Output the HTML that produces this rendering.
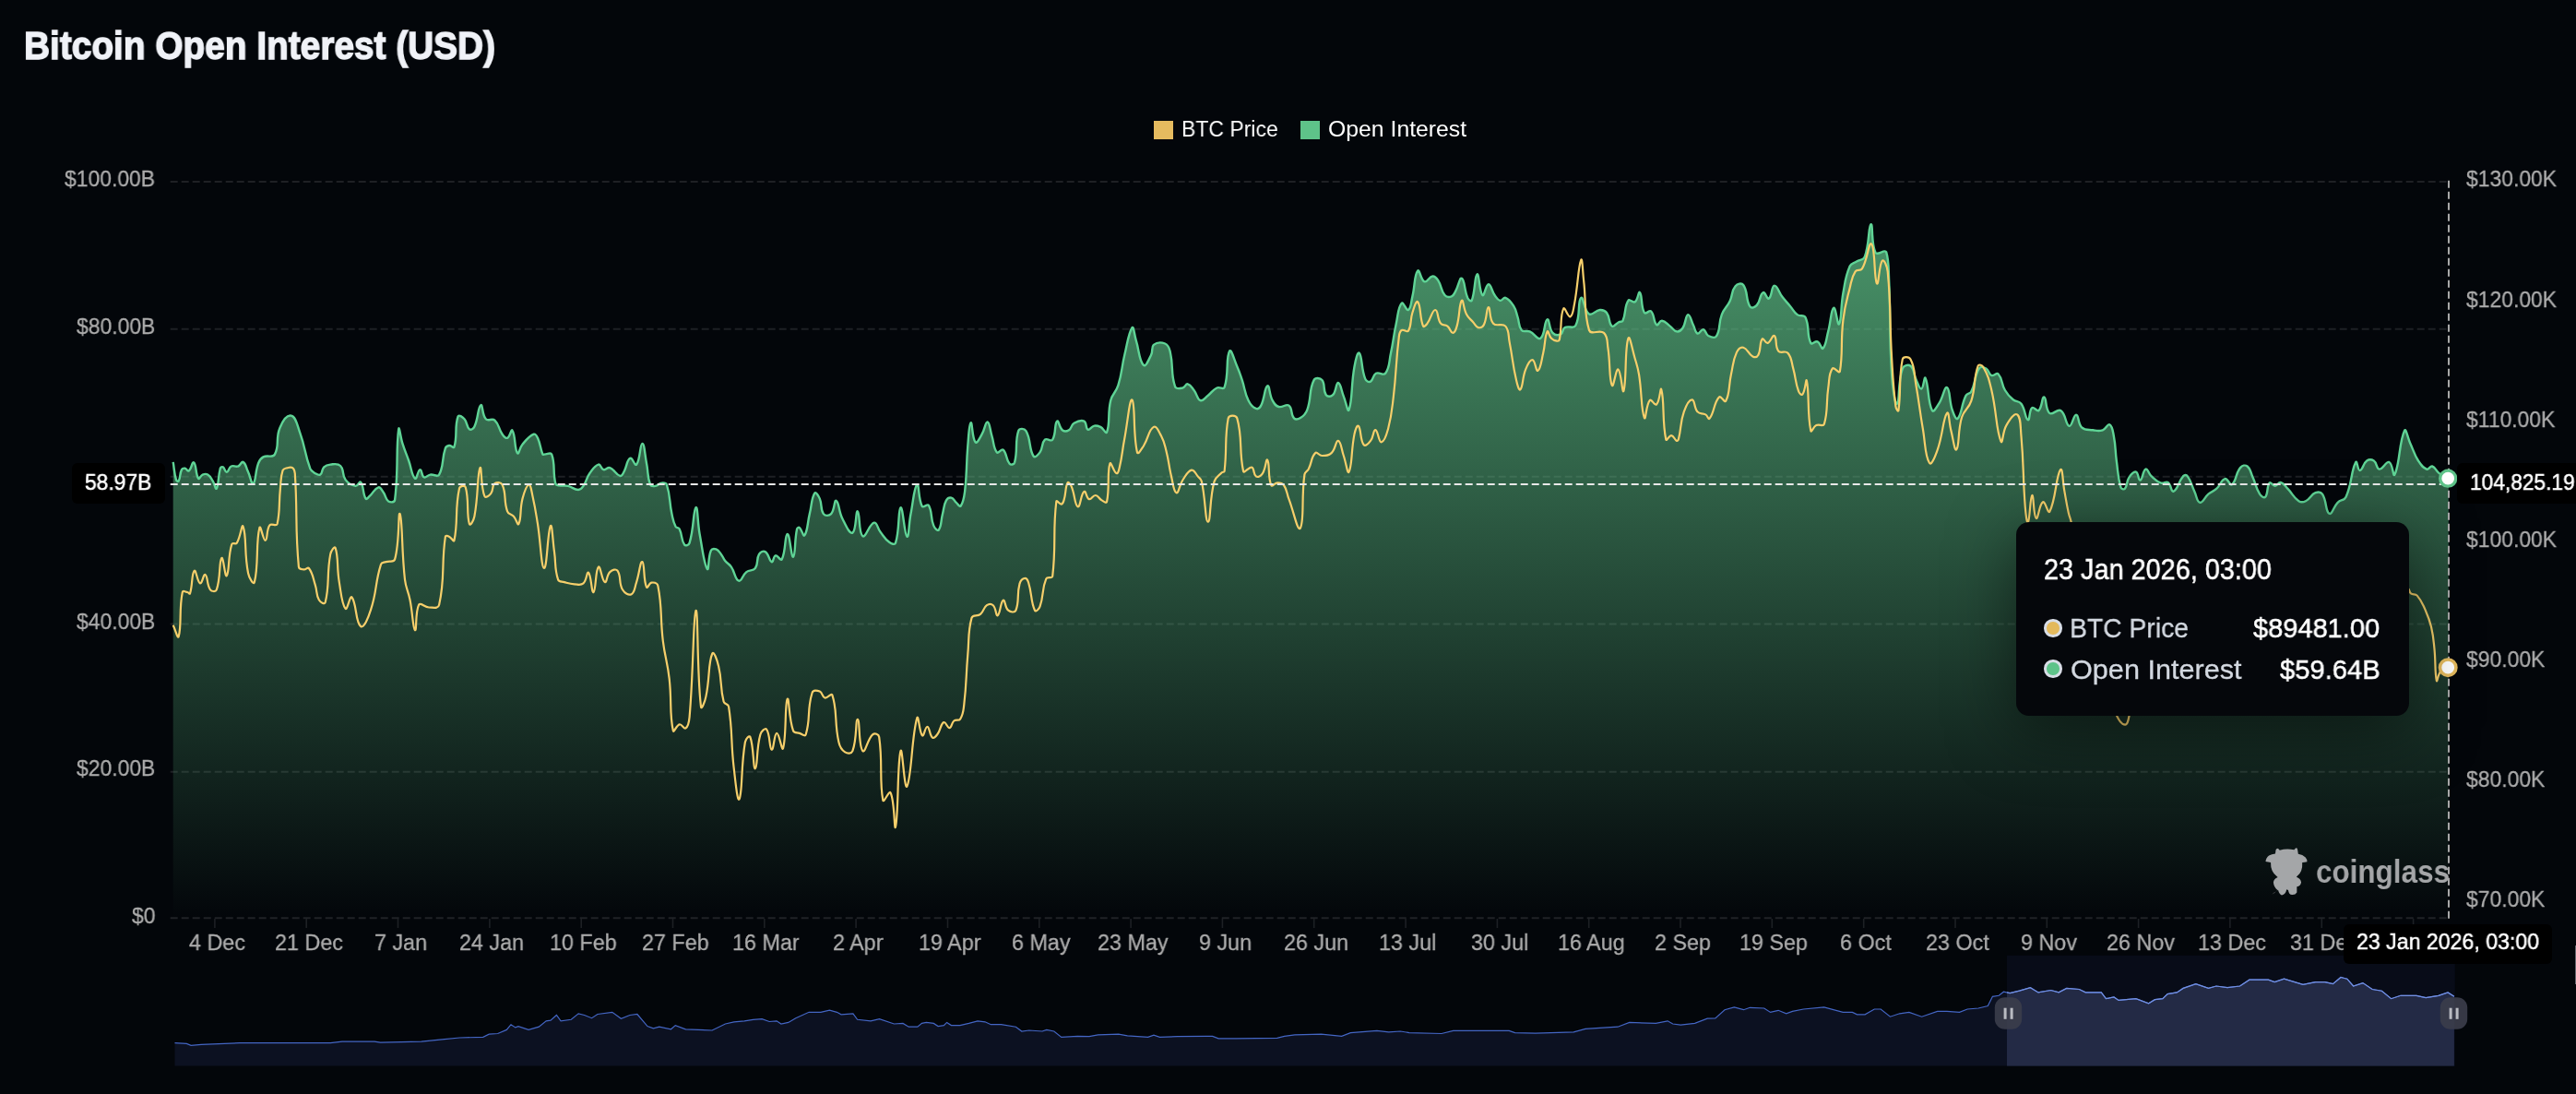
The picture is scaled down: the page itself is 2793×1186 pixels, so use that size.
<!DOCTYPE html>
<html><head><meta charset="utf-8"><style>
html,body{margin:0;padding:0;}
body{width:2793px;height:1186px;background:#03060a;overflow:hidden;position:relative;font-family:"Liberation Sans",sans-serif;}
.t{position:absolute;white-space:nowrap;line-height:1;transform-origin:0 0;will-change:transform;font-family:"Liberation Sans",sans-serif;}
</style></head><body>
<svg width="2793" height="1186" style="position:absolute;left:0;top:0">
<defs><linearGradient id="ga" gradientUnits="userSpaceOnUse" x1="0" y1="244" x2="0" y2="996"><stop offset="0" stop-color="#61c58a" stop-opacity="0.75"/><stop offset="1" stop-color="#61c58a" stop-opacity="0"/></linearGradient><clipPath id="cp"><rect x="187.7" y="0" width="2467.1" height="996"/></clipPath></defs>
<line x1="184.7" y1="197.0" x2="2655" y2="197.0" stroke="#1e2024" stroke-width="2" stroke-dasharray="8 4"/>
<line x1="184.7" y1="356.8" x2="2655" y2="356.8" stroke="#1e2024" stroke-width="2" stroke-dasharray="8 4"/>
<line x1="184.7" y1="516.7" x2="2655" y2="516.7" stroke="#1e2024" stroke-width="2" stroke-dasharray="8 4"/>
<line x1="184.7" y1="676.6" x2="2655" y2="676.6" stroke="#1e2024" stroke-width="2" stroke-dasharray="8 4"/>
<line x1="184.7" y1="836.7" x2="2655" y2="836.7" stroke="#1e2024" stroke-width="2" stroke-dasharray="8 4"/>
<line x1="184.7" y1="995.3" x2="2655" y2="995.3" stroke="#202327" stroke-width="2" stroke-dasharray="8 4"/>
<line x1="232.9" y1="996" x2="232.9" y2="1006" stroke="#1d2024" stroke-width="1.6"/>
<line x1="332.2" y1="996" x2="332.2" y2="1006" stroke="#1d2024" stroke-width="1.6"/>
<line x1="431.5" y1="996" x2="431.5" y2="1006" stroke="#1d2024" stroke-width="1.6"/>
<line x1="530.9" y1="996" x2="530.9" y2="1006" stroke="#1d2024" stroke-width="1.6"/>
<line x1="630.2" y1="996" x2="630.2" y2="1006" stroke="#1d2024" stroke-width="1.6"/>
<line x1="729.5" y1="996" x2="729.5" y2="1006" stroke="#1d2024" stroke-width="1.6"/>
<line x1="828.8" y1="996" x2="828.8" y2="1006" stroke="#1d2024" stroke-width="1.6"/>
<line x1="928.1" y1="996" x2="928.1" y2="1006" stroke="#1d2024" stroke-width="1.6"/>
<line x1="1027.5" y1="996" x2="1027.5" y2="1006" stroke="#1d2024" stroke-width="1.6"/>
<line x1="1126.8" y1="996" x2="1126.8" y2="1006" stroke="#1d2024" stroke-width="1.6"/>
<line x1="1226.1" y1="996" x2="1226.1" y2="1006" stroke="#1d2024" stroke-width="1.6"/>
<line x1="1325.4" y1="996" x2="1325.4" y2="1006" stroke="#1d2024" stroke-width="1.6"/>
<line x1="1424.7" y1="996" x2="1424.7" y2="1006" stroke="#1d2024" stroke-width="1.6"/>
<line x1="1524.1" y1="996" x2="1524.1" y2="1006" stroke="#1d2024" stroke-width="1.6"/>
<line x1="1623.4" y1="996" x2="1623.4" y2="1006" stroke="#1d2024" stroke-width="1.6"/>
<line x1="1722.7" y1="996" x2="1722.7" y2="1006" stroke="#1d2024" stroke-width="1.6"/>
<line x1="1822.0" y1="996" x2="1822.0" y2="1006" stroke="#1d2024" stroke-width="1.6"/>
<line x1="1921.3" y1="996" x2="1921.3" y2="1006" stroke="#1d2024" stroke-width="1.6"/>
<line x1="2020.7" y1="996" x2="2020.7" y2="1006" stroke="#1d2024" stroke-width="1.6"/>
<line x1="2120.0" y1="996" x2="2120.0" y2="1006" stroke="#1d2024" stroke-width="1.6"/>
<line x1="2219.3" y1="996" x2="2219.3" y2="1006" stroke="#1d2024" stroke-width="1.6"/>
<line x1="2318.6" y1="996" x2="2318.6" y2="1006" stroke="#1d2024" stroke-width="1.6"/>
<line x1="2417.9" y1="996" x2="2417.9" y2="1006" stroke="#1d2024" stroke-width="1.6"/>
<line x1="2517.3" y1="996" x2="2517.3" y2="1006" stroke="#1d2024" stroke-width="1.6"/>
<line x1="2616.6" y1="996" x2="2616.6" y2="1006" stroke="#1d2024" stroke-width="1.6"/>
<path d="M187.7,500.9 C189.2,509.5 188.6,512.1 191.0,520.1 C191.3,521.3 193.2,522.4 193.7,521.4 C195.9,517.4 194.6,513.8 197.0,509.1 C197.7,507.7 199.1,507.5 200.6,507.7 C202.5,508.1 203.3,511.4 204.7,510.5 C207.6,508.5 208.4,500.0 210.2,501.4 C213.1,503.7 211.9,514.3 215.1,518.7 C216.2,520.2 217.3,515.6 219.7,514.6 C221.9,513.7 223.3,513.4 225.2,514.6 C228.3,516.5 228.6,518.1 230.7,521.4 C232.9,524.9 233.7,531.4 234.8,529.6 C237.4,525.3 236.2,516.9 238.9,507.7 C239.3,506.5 240.7,505.8 241.7,506.3 C243.8,507.6 243.9,512.0 245.8,511.8 C248.0,511.6 247.8,507.0 250.7,505.5 C253.4,504.2 255.2,506.6 258.1,505.5 C261.0,504.5 261.8,499.8 263.6,500.9 C266.7,502.7 266.7,506.8 269.1,511.8 C271.7,517.3 272.7,525.8 274.6,524.2 C277.7,521.5 276.5,511.6 280.1,502.2 C281.4,498.6 282.3,497.2 285.5,495.4 C290.3,492.8 295.5,496.9 297.9,492.6 C303.4,482.7 298.4,475.5 303.4,463.9 C306.4,456.7 311.1,449.6 315.7,450.7 C321.0,452.0 322.1,460.5 325.3,469.3 C331.4,486.2 330.1,491.2 336.2,507.7 C337.5,510.9 338.9,511.4 341.7,513.2 C343.8,514.5 345.6,515.7 347.2,514.6 C349.9,512.7 348.6,509.1 351.3,506.3 C353.5,504.2 355.0,503.9 358.2,503.6 C363.0,503.2 366.1,502.0 369.1,505.0 C373.5,509.4 370.5,514.6 374.6,520.1 C377.9,524.5 380.8,526.1 385.6,526.9 C388.2,527.3 389.7,521.1 391.1,522.8 C394.7,527.3 393.1,535.3 396.6,540.6 C397.5,542.0 399.0,539.4 400.7,537.9 C405.2,533.8 405.9,529.5 410.3,528.3 C412.7,527.6 413.7,531.0 415.7,533.8 C418.6,537.7 417.8,541.1 421.2,543.4 C423.4,544.8 427.7,544.9 428.1,542.0 C432.2,509.8 429.1,488.3 432.2,465.2 C432.8,460.5 434.2,473.6 436.3,480.3 C439.1,489.0 440.1,490.9 443.2,499.5 C446.2,508.1 446.4,515.9 450.0,518.7 C452.0,520.2 453.1,509.4 455.5,509.1 C457.5,508.8 456.9,515.9 459.6,517.3 C461.8,518.4 463.2,515.1 466.5,514.6 C470.6,513.9 474.2,517.7 476.1,514.6 C481.6,504.8 478.7,497.9 482.9,485.8 C483.6,483.8 485.0,483.3 487.0,483.0 C489.3,482.7 491.9,486.5 492.5,484.4 C496.2,472.3 492.6,462.6 496.6,451.5 C497.5,449.1 501.4,451.9 503.5,454.3 C506.9,458.1 505.7,462.8 508.9,465.2 C510.6,466.5 513.3,464.9 514.4,462.5 C518.9,453.1 517.9,441.4 521.3,439.2 C523.5,437.7 522.5,449.7 526.8,454.3 C529.3,457.1 533.5,453.0 536.4,455.6 C541.5,460.4 540.2,464.5 544.6,470.7 C546.3,473.2 548.0,475.6 550.1,474.8 C553.0,473.7 554.2,464.5 555.5,466.6 C559.1,471.9 557.6,486.6 561.0,491.3 C562.5,493.3 563.3,485.4 566.5,481.7 C571.3,476.1 573.4,473.0 578.8,470.7 C580.8,469.9 581.9,472.5 583.0,474.8 C586.3,482.3 585.5,485.2 588.4,492.6 C588.7,493.3 589.3,492.6 590.0,492.6 C593.7,492.6 597.1,489.7 598.2,492.6 C602.3,503.9 599.1,510.9 602.3,524.2 C602.8,526.1 604.4,526.0 606.4,526.4 C610.6,527.2 611.9,526.0 616.0,526.9 C621.1,528.1 622.3,531.0 627.0,531.0 C629.7,531.0 630.8,529.4 632.5,526.9 C636.3,521.4 635.4,518.8 639.3,513.2 C642.8,508.3 644.6,504.8 648.9,503.6 C651.4,502.9 651.5,508.3 654.4,509.1 C657.1,509.9 658.6,506.1 661.3,507.2 C666.6,509.2 667.4,514.5 672.2,515.9 C674.2,516.6 675.1,514.1 676.3,511.8 C680.0,505.4 679.3,499.1 683.2,496.8 C685.5,495.4 688.3,505.7 690.1,503.6 C694.3,498.5 693.8,481.2 696.4,480.9 C698.7,480.6 699.1,492.6 701.0,502.2 C703.1,512.7 701.6,516.6 705.1,525.5 C706.0,527.7 708.2,527.3 710.6,526.9 C713.8,526.4 714.3,524.0 717.5,523.6 C719.9,523.4 722.2,523.2 722.9,525.5 C727.1,538.3 725.4,543.0 728.4,557.1 C729.8,563.4 729.8,565.3 732.5,570.8 C733.5,572.7 735.7,571.6 736.7,573.5 C740.0,580.5 738.4,585.4 742.1,590.5 C743.3,592.2 746.9,590.9 747.6,588.6 C752.5,572.8 751.6,552.7 754.5,550.2 C756.6,548.4 756.2,566.1 758.6,579.0 C761.8,596.1 763.2,611.6 766.8,616.8 C768.7,619.6 767.5,604.3 770.9,596.8 C771.9,594.7 774.3,594.7 776.4,595.4 C779.3,596.5 779.8,598.2 781.9,600.9 C784.1,603.7 783.8,605.0 786.0,607.8 C788.7,611.2 790.4,611.1 792.9,614.6 C797.2,620.9 796.8,628.3 801.1,629.7 C804.2,630.7 804.9,623.5 809.3,620.1 C812.9,617.3 816.4,619.5 818.9,616.0 C822.6,610.8 819.7,606.4 823.0,600.9 C824.6,598.3 827.6,596.8 829.9,598.2 C833.8,600.5 833.7,608.0 836.7,609.1 C838.6,609.9 838.4,602.9 840.8,602.3 C843.3,601.7 846.4,608.7 847.7,606.4 C852.2,598.2 850.8,579.6 853.7,579.0 C856.3,578.4 857.9,604.8 860.0,603.7 C862.6,602.3 861.3,586.4 864.1,573.5 C864.4,572.2 866.0,571.4 866.9,572.1 C869.7,574.5 870.9,582.3 872.3,580.4 C875.8,575.6 875.3,567.5 877.8,557.1 C880.3,546.9 879.7,540.1 883.3,534.6 C884.6,532.7 887.4,537.3 888.8,540.6 C891.7,547.4 889.2,552.1 892.9,557.1 C894.7,559.5 899.0,559.3 901.1,557.1 C905.1,552.9 904.3,541.8 906.6,542.8 C909.8,544.2 909.2,554.3 913.5,562.5 C917.2,569.9 921.2,579.2 924.4,577.6 C928.6,575.5 927.6,553.6 929.9,554.3 C932.5,555.2 930.7,577.9 935.4,581.2 C938.7,583.5 942.5,567.9 947.7,566.7 C951.1,565.9 951.2,572.5 954.6,576.8 C958.6,582.0 959.2,584.2 964.2,587.8 C966.6,589.5 970.2,591.1 971.0,588.6 C975.7,574.2 973.5,551.9 976.5,550.2 C979.0,548.8 980.6,580.0 983.4,581.7 C985.5,583.1 985.3,568.1 987.5,557.1 C990.3,542.8 991.1,527.7 994.3,525.5 C996.7,524.0 995.5,541.1 999.8,548.8 C1001.1,551.1 1005.5,545.7 1006.9,547.9 C1011.1,555.1 1008.6,560.8 1012.3,569.9 C1013.5,572.7 1016.6,576.1 1017.8,574.5 C1020.9,570.6 1020.0,565.1 1021.9,557.5 C1023.7,550.7 1022.9,548.2 1026.0,542.4 C1027.3,540.2 1029.3,539.2 1031.5,539.7 C1034.3,540.4 1034.4,542.9 1037.0,545.2 C1038.9,546.9 1040.6,549.9 1041.7,548.5 C1044.7,544.4 1045.2,540.1 1046.1,532.9 C1048.7,510.8 1047.4,505.7 1049.3,483.5 C1050.3,472.1 1050.6,459.3 1052.6,458.3 C1054.3,457.4 1054.0,475.5 1057.6,479.4 C1059.3,481.3 1062.0,475.3 1064.4,471.2 C1067.9,465.4 1068.3,457.2 1070.7,457.5 C1073.2,457.8 1073.3,465.8 1075.4,472.5 C1077.9,480.6 1076.9,485.5 1080.9,490.4 C1082.4,492.3 1085.8,485.9 1087.7,487.6 C1092.0,491.5 1090.4,498.1 1094.6,502.7 C1096.0,504.3 1099.4,503.6 1100.1,501.3 C1103.8,487.5 1100.1,479.5 1104.2,467.1 C1105.2,464.1 1110.7,464.3 1112.4,467.1 C1118.1,476.6 1115.3,486.3 1120.6,494.5 C1122.1,496.8 1125.5,493.2 1127.5,490.4 C1131.1,485.2 1129.0,480.6 1132.9,476.7 C1135.2,474.4 1139.5,479.2 1141.2,476.7 C1145.4,470.2 1142.9,459.6 1146.1,456.6 C1147.9,455.0 1148.5,463.8 1152.1,466.5 C1154.3,468.1 1156.6,467.7 1159.0,466.2 C1162.2,464.3 1161.1,460.8 1164.5,458.8 C1168.5,456.5 1171.8,455.0 1175.4,456.6 C1178.6,458.1 1176.8,464.5 1179.6,465.7 C1181.7,466.7 1183.1,462.2 1186.4,461.6 C1189.3,461.0 1190.5,461.6 1193.3,462.9 C1196.7,464.7 1199.1,471.1 1200.1,468.4 C1204.0,458.1 1200.6,449.1 1204.2,434.2 C1206.2,426.2 1210.0,425.6 1212.4,417.7 C1216.8,403.4 1215.8,399.5 1219.3,384.8 C1222.5,371.4 1223.7,360.3 1227.5,355.2 C1229.2,352.9 1229.8,362.4 1231.6,368.4 C1235.4,380.7 1234.9,390.8 1239.9,395.8 C1242.3,398.2 1245.4,390.2 1248.1,384.8 C1250.3,380.4 1248.1,376.5 1250.8,373.9 C1254.4,371.0 1258.7,370.8 1263.2,372.5 C1266.7,373.9 1267.6,376.5 1268.6,380.7 C1272.6,397.4 1269.0,404.4 1274.1,419.1 C1275.2,422.3 1279.0,421.1 1282.3,420.5 C1285.1,419.9 1285.5,415.8 1287.8,416.3 C1291.1,417.1 1292.0,419.8 1294.7,423.2 C1298.2,427.8 1297.7,432.8 1301.5,434.2 C1304.5,435.2 1306.2,431.4 1309.8,428.7 C1314.3,425.2 1314.5,422.8 1319.4,420.5 C1322.5,418.9 1326.5,423.0 1327.6,419.9 C1332.7,405.1 1328.8,387.7 1333.1,380.7 C1335.0,377.5 1338.0,389.6 1341.3,397.2 C1344.2,403.8 1344.5,405.4 1346.8,412.2 C1350.0,422.0 1349.2,425.1 1353.6,434.2 C1355.9,438.9 1357.8,441.3 1361.8,442.9 C1364.0,443.8 1366.1,442.1 1367.3,439.6 C1371.6,431.0 1371.0,419.7 1374.2,418.3 C1376.6,417.2 1376.1,427.7 1379.7,434.2 C1381.7,437.9 1382.8,439.9 1386.5,441.0 C1390.8,442.3 1394.3,437.3 1397.5,439.6 C1401.7,442.8 1399.1,449.3 1403.0,453.4 C1404.8,455.3 1407.5,454.6 1410.0,453.0 C1414.0,450.5 1415.6,449.0 1417.3,444.3 C1422.2,430.6 1418.9,423.5 1424.6,412.1 C1426.1,409.0 1431.4,409.6 1433.4,412.1 C1437.3,416.8 1434.1,423.1 1437.8,428.2 C1439.4,430.4 1443.1,430.2 1445.1,428.2 C1449.0,424.2 1448.4,414.7 1450.9,415.0 C1453.7,415.4 1454.2,423.1 1456.8,429.6 C1459.4,436.2 1461.3,447.9 1462.6,444.3 C1466.6,433.4 1464.7,418.3 1468.5,397.5 C1469.7,390.6 1471.9,380.8 1473.8,382.8 C1477.2,386.7 1475.7,399.4 1480.2,410.6 C1481.2,413.2 1484.0,414.6 1486.0,413.6 C1489.3,411.9 1488.2,406.8 1491.9,404.8 C1495.5,402.8 1499.9,407.8 1502.1,404.8 C1507.1,398.0 1505.8,392.8 1508.0,382.8 C1511.1,368.5 1510.7,365.0 1513.8,350.7 C1516.0,340.7 1515.6,333.3 1519.7,328.7 C1521.5,326.7 1524.9,337.4 1527.0,336.0 C1530.1,334.1 1529.8,328.1 1531.4,321.4 C1534.4,309.0 1533.2,298.5 1537.2,293.6 C1539.2,291.3 1540.4,303.8 1544.5,305.3 C1547.7,306.5 1549.4,299.9 1553.3,299.5 C1556.0,299.2 1557.4,301.2 1559.2,303.9 C1563.4,310.4 1561.9,314.4 1566.5,320.0 C1568.4,322.3 1571.1,322.4 1573.8,321.4 C1576.4,320.4 1576.6,318.4 1578.2,315.6 C1581.6,309.6 1582.5,300.5 1584.9,301.8 C1588.4,303.8 1587.4,314.2 1591.3,322.9 C1592.3,325.0 1595.0,327.6 1595.7,325.8 C1599.6,316.1 1598.7,298.9 1601.6,297.4 C1603.9,296.3 1603.9,316.9 1607.4,320.0 C1609.4,321.7 1610.9,308.3 1613.9,308.3 C1616.8,308.3 1617.1,315.1 1620.6,320.0 C1622.7,323.0 1623.5,325.1 1626.4,325.8 C1628.8,326.4 1630.0,322.0 1632.3,322.9 C1636.6,324.6 1638.1,327.1 1641.1,331.7 C1644.0,336.3 1643.7,338.0 1645.4,343.4 C1647.6,349.9 1646.1,353.4 1649.8,358.0 C1652.0,360.6 1655.0,357.9 1658.6,359.4 C1664.2,361.8 1667.0,369.1 1670.3,366.8 C1675.5,363.1 1674.2,347.8 1677.6,346.3 C1680.1,345.2 1679.3,356.3 1683.5,360.9 C1685.8,363.5 1689.2,363.7 1692.2,362.4 C1695.1,361.1 1693.6,356.8 1696.6,355.1 C1700.8,352.6 1706.1,357.0 1708.3,353.0 C1714.0,342.6 1710.2,326.3 1714.2,322.9 C1716.7,320.7 1717.3,336.8 1723.0,340.4 C1726.5,342.7 1729.4,336.4 1734.7,336.0 C1738.0,335.8 1740.0,336.3 1742.0,339.0 C1745.9,344.2 1744.0,350.6 1747.8,353.6 C1749.9,355.2 1751.7,350.9 1755.1,349.2 C1757.0,348.3 1758.7,349.5 1759.5,347.7 C1763.3,339.0 1760.9,332.7 1765.4,325.8 C1766.8,323.5 1770.5,328.8 1772.7,327.3 C1776.1,324.9 1776.4,315.3 1777.9,317.0 C1781.0,320.5 1778.8,332.1 1782.9,339.0 C1784.3,341.3 1788.3,335.6 1790.2,337.5 C1794.2,341.5 1792.5,349.0 1796.1,352.1 C1797.7,353.6 1799.2,347.5 1801.9,347.7 C1805.8,348.1 1806.9,350.8 1810.7,353.6 C1814.1,356.1 1814.6,358.9 1818.0,359.4 C1820.7,359.9 1822.6,358.4 1824.4,355.8 C1828.1,350.2 1827.4,341.9 1830.2,341.1 C1832.6,340.5 1833.5,347.6 1836.1,352.8 C1838.1,356.8 1837.8,360.5 1840.5,361.6 C1842.6,362.5 1844.4,356.7 1846.9,357.2 C1849.7,357.8 1849.1,362.3 1852.2,364.0 C1855.4,365.6 1859.2,367.3 1860.9,364.5 C1865.8,357.0 1862.9,351.2 1866.8,341.1 C1869.5,334.1 1872.3,333.4 1875.6,326.5 C1878.9,319.6 1877.1,315.6 1881.4,310.4 C1883.7,307.7 1888.3,306.3 1890.2,309.0 C1895.5,316.2 1892.5,324.8 1897.5,332.4 C1899.0,334.7 1902.8,333.1 1904.8,330.9 C1909.1,326.3 1907.8,319.2 1911.5,317.2 C1913.8,315.9 1915.9,324.9 1918.0,323.6 C1921.4,321.5 1920.6,309.9 1923.8,309.6 C1927.1,309.2 1928.4,316.7 1932.6,322.1 C1936.3,326.9 1937.5,327.7 1941.4,332.4 C1944.7,336.3 1944.7,338.2 1948.7,341.1 C1951.9,343.5 1955.9,340.7 1957.5,344.1 C1962.4,354.5 1958.6,362.5 1963.3,371.9 C1964.5,374.3 1968.0,369.2 1970.6,370.4 C1973.9,371.9 1974.8,379.4 1976.5,377.7 C1980.1,374.1 1980.0,367.3 1982.3,358.7 C1985.3,347.6 1985.1,335.7 1988.2,333.8 C1990.4,332.4 1992.4,353.9 1994.0,351.4 C1997.0,346.7 1995.6,332.7 1998.4,317.7 C2000.9,304.4 2000.6,300.4 2005.7,288.5 C2007.2,285.0 2009.7,285.7 2013.0,283.5 C2016.9,281.1 2020.3,282.3 2021.8,278.3 C2027.2,264.1 2025.7,244.2 2028.5,243.2 C2031.0,242.2 2028.5,264.0 2033.5,273.9 C2035.6,277.6 2043.4,269.6 2045.2,273.3 C2048.1,282.8 2047.5,289.7 2048.1,303.1 C2050.2,349.1 2048.1,359.6 2051.1,405.5 C2052.0,420.1 2054.5,438.9 2056.9,437.7 C2059.8,436.2 2057.5,414.5 2062.8,399.6 C2064.0,396.1 2069.1,394.8 2071.5,396.7 C2075.7,400.0 2074.4,404.9 2077.4,411.3 C2079.6,416.1 2081.0,421.9 2083.2,421.6 C2085.6,421.2 2086.3,407.2 2087.6,409.9 C2091.5,417.7 2089.8,435.3 2094.9,445.0 C2096.4,447.8 2099.7,441.5 2102.2,437.7 C2107.0,430.3 2108.2,418.7 2111.0,420.1 C2114.7,422.0 2113.1,434.3 2116.9,445.0 C2118.4,449.4 2120.8,455.8 2122.7,453.7 C2127.4,448.6 2126.3,439.2 2131.5,428.9 C2132.9,426.0 2135.9,427.4 2137.3,424.5 C2142.5,413.9 2140.4,407.8 2146.1,399.1 C2147.7,396.7 2150.8,398.1 2153.4,399.6 C2156.8,401.6 2156.0,405.5 2159.3,407.0 C2161.9,408.1 2164.7,403.5 2166.6,405.5 C2171.3,410.7 2169.7,415.7 2173.9,423.0 C2176.9,428.2 2178.1,429.5 2182.7,433.3 C2186.0,436.0 2189.0,434.3 2191.5,437.7 C2196.2,444.2 2195.7,454.1 2198.8,455.2 C2201.0,456.0 2199.8,445.0 2203.2,442.1 C2205.1,440.4 2208.5,446.7 2210.5,445.0 C2214.4,441.5 2213.9,429.7 2216.3,430.4 C2219.2,431.1 2217.3,443.9 2222.2,447.9 C2225.5,450.6 2230.7,442.7 2234.5,445.2 C2240.3,449.0 2239.3,460.7 2243.6,461.8 C2246.8,462.7 2248.1,449.4 2251.1,449.8 C2254.2,450.1 2252.7,459.3 2257.1,463.3 C2260.9,466.7 2263.7,465.6 2269.2,466.3 C2273.9,467.0 2275.5,467.8 2279.8,466.3 C2283.6,465.0 2285.0,459.2 2287.3,460.3 C2290.4,461.9 2290.7,466.7 2291.8,472.4 C2294.1,484.4 2293.2,487.3 2294.8,499.5 C2296.6,512.4 2295.9,516.5 2299.4,528.2 C2299.9,530.1 2302.8,531.0 2303.9,529.7 C2306.9,526.2 2305.3,522.3 2308.4,517.6 C2310.7,514.1 2313.3,510.9 2315.9,511.6 C2318.7,512.3 2318.4,521.2 2320.5,520.6 C2323.2,519.9 2323.3,509.8 2326.5,508.6 C2328.8,507.7 2329.3,513.2 2332.5,516.1 C2336.8,520.0 2337.9,521.7 2343.1,523.6 C2346.1,524.8 2348.2,521.4 2350.6,523.0 C2354.3,525.5 2353.9,533.8 2356.7,532.7 C2361.4,530.7 2361.7,522.2 2367.2,516.1 C2368.5,514.7 2370.7,514.6 2371.7,516.1 C2376.1,522.1 2375.8,525.3 2379.3,532.7 C2381.9,538.2 2381.8,544.1 2385.3,544.8 C2388.6,545.4 2390.0,539.4 2394.4,535.7 C2398.1,532.6 2399.8,533.0 2403.4,529.7 C2408.0,525.5 2408.0,520.3 2412.4,519.1 C2415.5,518.3 2417.6,526.9 2420.0,525.2 C2425.0,521.5 2423.6,513.4 2429.0,507.1 C2431.1,504.6 2434.4,503.8 2436.6,505.5 C2440.5,508.6 2440.1,512.1 2442.6,517.6 C2446.2,525.7 2445.6,528.6 2450.1,535.7 C2451.7,538.1 2454.8,540.3 2456.2,538.7 C2459.5,534.9 2457.4,527.4 2460.7,523.6 C2462.1,522.0 2464.1,526.8 2466.7,526.7 C2469.5,526.5 2470.2,522.5 2472.8,523.0 C2476.4,523.8 2477.2,526.4 2480.3,529.7 C2486.0,535.5 2486.1,538.9 2492.4,543.2 C2495.0,545.0 2497.0,544.7 2499.9,543.2 C2505.2,540.6 2505.2,536.4 2510.5,534.2 C2513.4,533.0 2516.3,533.1 2518.0,535.7 C2523.0,543.3 2521.1,554.4 2525.5,556.8 C2528.5,558.5 2529.9,549.5 2534.6,544.8 C2538.0,541.3 2541.7,543.0 2543.6,538.7 C2550.5,523.3 2548.8,511.3 2554.2,501.0 C2555.6,498.4 2556.3,510.4 2558.7,510.1 C2561.8,509.7 2562.0,502.5 2566.2,499.5 C2568.7,497.8 2571.3,497.9 2573.8,499.5 C2577.4,501.9 2576.4,508.3 2579.8,508.6 C2583.9,508.9 2586.9,499.8 2590.4,501.0 C2594.4,502.5 2594.7,518.2 2596.4,514.6 C2602.1,502.8 2601.2,479.0 2607.0,466.9 C2608.7,463.4 2610.3,474.1 2613.0,479.9 C2617.1,488.7 2616.9,491.4 2622.0,499.5 C2625.1,504.3 2626.6,506.8 2631.1,508.6 C2633.4,509.5 2634.8,504.8 2637.1,505.5 C2640.9,506.8 2640.8,510.3 2644.7,513.1 C2648.8,516.2 2650.2,516.2 2654.8,518.7 L2654.8,995.5 L187.7,995.5 Z" fill="url(#ga)"/>
<path d="M187.7,500.9 C189.2,509.5 188.6,512.1 191.0,520.1 C191.3,521.3 193.2,522.4 193.7,521.4 C195.9,517.4 194.6,513.8 197.0,509.1 C197.7,507.7 199.1,507.5 200.6,507.7 C202.5,508.1 203.3,511.4 204.7,510.5 C207.6,508.5 208.4,500.0 210.2,501.4 C213.1,503.7 211.9,514.3 215.1,518.7 C216.2,520.2 217.3,515.6 219.7,514.6 C221.9,513.7 223.3,513.4 225.2,514.6 C228.3,516.5 228.6,518.1 230.7,521.4 C232.9,524.9 233.7,531.4 234.8,529.6 C237.4,525.3 236.2,516.9 238.9,507.7 C239.3,506.5 240.7,505.8 241.7,506.3 C243.8,507.6 243.9,512.0 245.8,511.8 C248.0,511.6 247.8,507.0 250.7,505.5 C253.4,504.2 255.2,506.6 258.1,505.5 C261.0,504.5 261.8,499.8 263.6,500.9 C266.7,502.7 266.7,506.8 269.1,511.8 C271.7,517.3 272.7,525.8 274.6,524.2 C277.7,521.5 276.5,511.6 280.1,502.2 C281.4,498.6 282.3,497.2 285.5,495.4 C290.3,492.8 295.5,496.9 297.9,492.6 C303.4,482.7 298.4,475.5 303.4,463.9 C306.4,456.7 311.1,449.6 315.7,450.7 C321.0,452.0 322.1,460.5 325.3,469.3 C331.4,486.2 330.1,491.2 336.2,507.7 C337.5,510.9 338.9,511.4 341.7,513.2 C343.8,514.5 345.6,515.7 347.2,514.6 C349.9,512.7 348.6,509.1 351.3,506.3 C353.5,504.2 355.0,503.9 358.2,503.6 C363.0,503.2 366.1,502.0 369.1,505.0 C373.5,509.4 370.5,514.6 374.6,520.1 C377.9,524.5 380.8,526.1 385.6,526.9 C388.2,527.3 389.7,521.1 391.1,522.8 C394.7,527.3 393.1,535.3 396.6,540.6 C397.5,542.0 399.0,539.4 400.7,537.9 C405.2,533.8 405.9,529.5 410.3,528.3 C412.7,527.6 413.7,531.0 415.7,533.8 C418.6,537.7 417.8,541.1 421.2,543.4 C423.4,544.8 427.7,544.9 428.1,542.0 C432.2,509.8 429.1,488.3 432.2,465.2 C432.8,460.5 434.2,473.6 436.3,480.3 C439.1,489.0 440.1,490.9 443.2,499.5 C446.2,508.1 446.4,515.9 450.0,518.7 C452.0,520.2 453.1,509.4 455.5,509.1 C457.5,508.8 456.9,515.9 459.6,517.3 C461.8,518.4 463.2,515.1 466.5,514.6 C470.6,513.9 474.2,517.7 476.1,514.6 C481.6,504.8 478.7,497.9 482.9,485.8 C483.6,483.8 485.0,483.3 487.0,483.0 C489.3,482.7 491.9,486.5 492.5,484.4 C496.2,472.3 492.6,462.6 496.6,451.5 C497.5,449.1 501.4,451.9 503.5,454.3 C506.9,458.1 505.7,462.8 508.9,465.2 C510.6,466.5 513.3,464.9 514.4,462.5 C518.9,453.1 517.9,441.4 521.3,439.2 C523.5,437.7 522.5,449.7 526.8,454.3 C529.3,457.1 533.5,453.0 536.4,455.6 C541.5,460.4 540.2,464.5 544.6,470.7 C546.3,473.2 548.0,475.6 550.1,474.8 C553.0,473.7 554.2,464.5 555.5,466.6 C559.1,471.9 557.6,486.6 561.0,491.3 C562.5,493.3 563.3,485.4 566.5,481.7 C571.3,476.1 573.4,473.0 578.8,470.7 C580.8,469.9 581.9,472.5 583.0,474.8 C586.3,482.3 585.5,485.2 588.4,492.6 C588.7,493.3 589.3,492.6 590.0,492.6 C593.7,492.6 597.1,489.7 598.2,492.6 C602.3,503.9 599.1,510.9 602.3,524.2 C602.8,526.1 604.4,526.0 606.4,526.4 C610.6,527.2 611.9,526.0 616.0,526.9 C621.1,528.1 622.3,531.0 627.0,531.0 C629.7,531.0 630.8,529.4 632.5,526.9 C636.3,521.4 635.4,518.8 639.3,513.2 C642.8,508.3 644.6,504.8 648.9,503.6 C651.4,502.9 651.5,508.3 654.4,509.1 C657.1,509.9 658.6,506.1 661.3,507.2 C666.6,509.2 667.4,514.5 672.2,515.9 C674.2,516.6 675.1,514.1 676.3,511.8 C680.0,505.4 679.3,499.1 683.2,496.8 C685.5,495.4 688.3,505.7 690.1,503.6 C694.3,498.5 693.8,481.2 696.4,480.9 C698.7,480.6 699.1,492.6 701.0,502.2 C703.1,512.7 701.6,516.6 705.1,525.5 C706.0,527.7 708.2,527.3 710.6,526.9 C713.8,526.4 714.3,524.0 717.5,523.6 C719.9,523.4 722.2,523.2 722.9,525.5 C727.1,538.3 725.4,543.0 728.4,557.1 C729.8,563.4 729.8,565.3 732.5,570.8 C733.5,572.7 735.7,571.6 736.7,573.5 C740.0,580.5 738.4,585.4 742.1,590.5 C743.3,592.2 746.9,590.9 747.6,588.6 C752.5,572.8 751.6,552.7 754.5,550.2 C756.6,548.4 756.2,566.1 758.6,579.0 C761.8,596.1 763.2,611.6 766.8,616.8 C768.7,619.6 767.5,604.3 770.9,596.8 C771.9,594.7 774.3,594.7 776.4,595.4 C779.3,596.5 779.8,598.2 781.9,600.9 C784.1,603.7 783.8,605.0 786.0,607.8 C788.7,611.2 790.4,611.1 792.9,614.6 C797.2,620.9 796.8,628.3 801.1,629.7 C804.2,630.7 804.9,623.5 809.3,620.1 C812.9,617.3 816.4,619.5 818.9,616.0 C822.6,610.8 819.7,606.4 823.0,600.9 C824.6,598.3 827.6,596.8 829.9,598.2 C833.8,600.5 833.7,608.0 836.7,609.1 C838.6,609.9 838.4,602.9 840.8,602.3 C843.3,601.7 846.4,608.7 847.7,606.4 C852.2,598.2 850.8,579.6 853.7,579.0 C856.3,578.4 857.9,604.8 860.0,603.7 C862.6,602.3 861.3,586.4 864.1,573.5 C864.4,572.2 866.0,571.4 866.9,572.1 C869.7,574.5 870.9,582.3 872.3,580.4 C875.8,575.6 875.3,567.5 877.8,557.1 C880.3,546.9 879.7,540.1 883.3,534.6 C884.6,532.7 887.4,537.3 888.8,540.6 C891.7,547.4 889.2,552.1 892.9,557.1 C894.7,559.5 899.0,559.3 901.1,557.1 C905.1,552.9 904.3,541.8 906.6,542.8 C909.8,544.2 909.2,554.3 913.5,562.5 C917.2,569.9 921.2,579.2 924.4,577.6 C928.6,575.5 927.6,553.6 929.9,554.3 C932.5,555.2 930.7,577.9 935.4,581.2 C938.7,583.5 942.5,567.9 947.7,566.7 C951.1,565.9 951.2,572.5 954.6,576.8 C958.6,582.0 959.2,584.2 964.2,587.8 C966.6,589.5 970.2,591.1 971.0,588.6 C975.7,574.2 973.5,551.9 976.5,550.2 C979.0,548.8 980.6,580.0 983.4,581.7 C985.5,583.1 985.3,568.1 987.5,557.1 C990.3,542.8 991.1,527.7 994.3,525.5 C996.7,524.0 995.5,541.1 999.8,548.8 C1001.1,551.1 1005.5,545.7 1006.9,547.9 C1011.1,555.1 1008.6,560.8 1012.3,569.9 C1013.5,572.7 1016.6,576.1 1017.8,574.5 C1020.9,570.6 1020.0,565.1 1021.9,557.5 C1023.7,550.7 1022.9,548.2 1026.0,542.4 C1027.3,540.2 1029.3,539.2 1031.5,539.7 C1034.3,540.4 1034.4,542.9 1037.0,545.2 C1038.9,546.9 1040.6,549.9 1041.7,548.5 C1044.7,544.4 1045.2,540.1 1046.1,532.9 C1048.7,510.8 1047.4,505.7 1049.3,483.5 C1050.3,472.1 1050.6,459.3 1052.6,458.3 C1054.3,457.4 1054.0,475.5 1057.6,479.4 C1059.3,481.3 1062.0,475.3 1064.4,471.2 C1067.9,465.4 1068.3,457.2 1070.7,457.5 C1073.2,457.8 1073.3,465.8 1075.4,472.5 C1077.9,480.6 1076.9,485.5 1080.9,490.4 C1082.4,492.3 1085.8,485.9 1087.7,487.6 C1092.0,491.5 1090.4,498.1 1094.6,502.7 C1096.0,504.3 1099.4,503.6 1100.1,501.3 C1103.8,487.5 1100.1,479.5 1104.2,467.1 C1105.2,464.1 1110.7,464.3 1112.4,467.1 C1118.1,476.6 1115.3,486.3 1120.6,494.5 C1122.1,496.8 1125.5,493.2 1127.5,490.4 C1131.1,485.2 1129.0,480.6 1132.9,476.7 C1135.2,474.4 1139.5,479.2 1141.2,476.7 C1145.4,470.2 1142.9,459.6 1146.1,456.6 C1147.9,455.0 1148.5,463.8 1152.1,466.5 C1154.3,468.1 1156.6,467.7 1159.0,466.2 C1162.2,464.3 1161.1,460.8 1164.5,458.8 C1168.5,456.5 1171.8,455.0 1175.4,456.6 C1178.6,458.1 1176.8,464.5 1179.6,465.7 C1181.7,466.7 1183.1,462.2 1186.4,461.6 C1189.3,461.0 1190.5,461.6 1193.3,462.9 C1196.7,464.7 1199.1,471.1 1200.1,468.4 C1204.0,458.1 1200.6,449.1 1204.2,434.2 C1206.2,426.2 1210.0,425.6 1212.4,417.7 C1216.8,403.4 1215.8,399.5 1219.3,384.8 C1222.5,371.4 1223.7,360.3 1227.5,355.2 C1229.2,352.9 1229.8,362.4 1231.6,368.4 C1235.4,380.7 1234.9,390.8 1239.9,395.8 C1242.3,398.2 1245.4,390.2 1248.1,384.8 C1250.3,380.4 1248.1,376.5 1250.8,373.9 C1254.4,371.0 1258.7,370.8 1263.2,372.5 C1266.7,373.9 1267.6,376.5 1268.6,380.7 C1272.6,397.4 1269.0,404.4 1274.1,419.1 C1275.2,422.3 1279.0,421.1 1282.3,420.5 C1285.1,419.9 1285.5,415.8 1287.8,416.3 C1291.1,417.1 1292.0,419.8 1294.7,423.2 C1298.2,427.8 1297.7,432.8 1301.5,434.2 C1304.5,435.2 1306.2,431.4 1309.8,428.7 C1314.3,425.2 1314.5,422.8 1319.4,420.5 C1322.5,418.9 1326.5,423.0 1327.6,419.9 C1332.7,405.1 1328.8,387.7 1333.1,380.7 C1335.0,377.5 1338.0,389.6 1341.3,397.2 C1344.2,403.8 1344.5,405.4 1346.8,412.2 C1350.0,422.0 1349.2,425.1 1353.6,434.2 C1355.9,438.9 1357.8,441.3 1361.8,442.9 C1364.0,443.8 1366.1,442.1 1367.3,439.6 C1371.6,431.0 1371.0,419.7 1374.2,418.3 C1376.6,417.2 1376.1,427.7 1379.7,434.2 C1381.7,437.9 1382.8,439.9 1386.5,441.0 C1390.8,442.3 1394.3,437.3 1397.5,439.6 C1401.7,442.8 1399.1,449.3 1403.0,453.4 C1404.8,455.3 1407.5,454.6 1410.0,453.0 C1414.0,450.5 1415.6,449.0 1417.3,444.3 C1422.2,430.6 1418.9,423.5 1424.6,412.1 C1426.1,409.0 1431.4,409.6 1433.4,412.1 C1437.3,416.8 1434.1,423.1 1437.8,428.2 C1439.4,430.4 1443.1,430.2 1445.1,428.2 C1449.0,424.2 1448.4,414.7 1450.9,415.0 C1453.7,415.4 1454.2,423.1 1456.8,429.6 C1459.4,436.2 1461.3,447.9 1462.6,444.3 C1466.6,433.4 1464.7,418.3 1468.5,397.5 C1469.7,390.6 1471.9,380.8 1473.8,382.8 C1477.2,386.7 1475.7,399.4 1480.2,410.6 C1481.2,413.2 1484.0,414.6 1486.0,413.6 C1489.3,411.9 1488.2,406.8 1491.9,404.8 C1495.5,402.8 1499.9,407.8 1502.1,404.8 C1507.1,398.0 1505.8,392.8 1508.0,382.8 C1511.1,368.5 1510.7,365.0 1513.8,350.7 C1516.0,340.7 1515.6,333.3 1519.7,328.7 C1521.5,326.7 1524.9,337.4 1527.0,336.0 C1530.1,334.1 1529.8,328.1 1531.4,321.4 C1534.4,309.0 1533.2,298.5 1537.2,293.6 C1539.2,291.3 1540.4,303.8 1544.5,305.3 C1547.7,306.5 1549.4,299.9 1553.3,299.5 C1556.0,299.2 1557.4,301.2 1559.2,303.9 C1563.4,310.4 1561.9,314.4 1566.5,320.0 C1568.4,322.3 1571.1,322.4 1573.8,321.4 C1576.4,320.4 1576.6,318.4 1578.2,315.6 C1581.6,309.6 1582.5,300.5 1584.9,301.8 C1588.4,303.8 1587.4,314.2 1591.3,322.9 C1592.3,325.0 1595.0,327.6 1595.7,325.8 C1599.6,316.1 1598.7,298.9 1601.6,297.4 C1603.9,296.3 1603.9,316.9 1607.4,320.0 C1609.4,321.7 1610.9,308.3 1613.9,308.3 C1616.8,308.3 1617.1,315.1 1620.6,320.0 C1622.7,323.0 1623.5,325.1 1626.4,325.8 C1628.8,326.4 1630.0,322.0 1632.3,322.9 C1636.6,324.6 1638.1,327.1 1641.1,331.7 C1644.0,336.3 1643.7,338.0 1645.4,343.4 C1647.6,349.9 1646.1,353.4 1649.8,358.0 C1652.0,360.6 1655.0,357.9 1658.6,359.4 C1664.2,361.8 1667.0,369.1 1670.3,366.8 C1675.5,363.1 1674.2,347.8 1677.6,346.3 C1680.1,345.2 1679.3,356.3 1683.5,360.9 C1685.8,363.5 1689.2,363.7 1692.2,362.4 C1695.1,361.1 1693.6,356.8 1696.6,355.1 C1700.8,352.6 1706.1,357.0 1708.3,353.0 C1714.0,342.6 1710.2,326.3 1714.2,322.9 C1716.7,320.7 1717.3,336.8 1723.0,340.4 C1726.5,342.7 1729.4,336.4 1734.7,336.0 C1738.0,335.8 1740.0,336.3 1742.0,339.0 C1745.9,344.2 1744.0,350.6 1747.8,353.6 C1749.9,355.2 1751.7,350.9 1755.1,349.2 C1757.0,348.3 1758.7,349.5 1759.5,347.7 C1763.3,339.0 1760.9,332.7 1765.4,325.8 C1766.8,323.5 1770.5,328.8 1772.7,327.3 C1776.1,324.9 1776.4,315.3 1777.9,317.0 C1781.0,320.5 1778.8,332.1 1782.9,339.0 C1784.3,341.3 1788.3,335.6 1790.2,337.5 C1794.2,341.5 1792.5,349.0 1796.1,352.1 C1797.7,353.6 1799.2,347.5 1801.9,347.7 C1805.8,348.1 1806.9,350.8 1810.7,353.6 C1814.1,356.1 1814.6,358.9 1818.0,359.4 C1820.7,359.9 1822.6,358.4 1824.4,355.8 C1828.1,350.2 1827.4,341.9 1830.2,341.1 C1832.6,340.5 1833.5,347.6 1836.1,352.8 C1838.1,356.8 1837.8,360.5 1840.5,361.6 C1842.6,362.5 1844.4,356.7 1846.9,357.2 C1849.7,357.8 1849.1,362.3 1852.2,364.0 C1855.4,365.6 1859.2,367.3 1860.9,364.5 C1865.8,357.0 1862.9,351.2 1866.8,341.1 C1869.5,334.1 1872.3,333.4 1875.6,326.5 C1878.9,319.6 1877.1,315.6 1881.4,310.4 C1883.7,307.7 1888.3,306.3 1890.2,309.0 C1895.5,316.2 1892.5,324.8 1897.5,332.4 C1899.0,334.7 1902.8,333.1 1904.8,330.9 C1909.1,326.3 1907.8,319.2 1911.5,317.2 C1913.8,315.9 1915.9,324.9 1918.0,323.6 C1921.4,321.5 1920.6,309.9 1923.8,309.6 C1927.1,309.2 1928.4,316.7 1932.6,322.1 C1936.3,326.9 1937.5,327.7 1941.4,332.4 C1944.7,336.3 1944.7,338.2 1948.7,341.1 C1951.9,343.5 1955.9,340.7 1957.5,344.1 C1962.4,354.5 1958.6,362.5 1963.3,371.9 C1964.5,374.3 1968.0,369.2 1970.6,370.4 C1973.9,371.9 1974.8,379.4 1976.5,377.7 C1980.1,374.1 1980.0,367.3 1982.3,358.7 C1985.3,347.6 1985.1,335.7 1988.2,333.8 C1990.4,332.4 1992.4,353.9 1994.0,351.4 C1997.0,346.7 1995.6,332.7 1998.4,317.7 C2000.9,304.4 2000.6,300.4 2005.7,288.5 C2007.2,285.0 2009.7,285.7 2013.0,283.5 C2016.9,281.1 2020.3,282.3 2021.8,278.3 C2027.2,264.1 2025.7,244.2 2028.5,243.2 C2031.0,242.2 2028.5,264.0 2033.5,273.9 C2035.6,277.6 2043.4,269.6 2045.2,273.3 C2048.1,282.8 2047.5,289.7 2048.1,303.1 C2050.2,349.1 2048.1,359.6 2051.1,405.5 C2052.0,420.1 2054.5,438.9 2056.9,437.7 C2059.8,436.2 2057.5,414.5 2062.8,399.6 C2064.0,396.1 2069.1,394.8 2071.5,396.7 C2075.7,400.0 2074.4,404.9 2077.4,411.3 C2079.6,416.1 2081.0,421.9 2083.2,421.6 C2085.6,421.2 2086.3,407.2 2087.6,409.9 C2091.5,417.7 2089.8,435.3 2094.9,445.0 C2096.4,447.8 2099.7,441.5 2102.2,437.7 C2107.0,430.3 2108.2,418.7 2111.0,420.1 C2114.7,422.0 2113.1,434.3 2116.9,445.0 C2118.4,449.4 2120.8,455.8 2122.7,453.7 C2127.4,448.6 2126.3,439.2 2131.5,428.9 C2132.9,426.0 2135.9,427.4 2137.3,424.5 C2142.5,413.9 2140.4,407.8 2146.1,399.1 C2147.7,396.7 2150.8,398.1 2153.4,399.6 C2156.8,401.6 2156.0,405.5 2159.3,407.0 C2161.9,408.1 2164.7,403.5 2166.6,405.5 C2171.3,410.7 2169.7,415.7 2173.9,423.0 C2176.9,428.2 2178.1,429.5 2182.7,433.3 C2186.0,436.0 2189.0,434.3 2191.5,437.7 C2196.2,444.2 2195.7,454.1 2198.8,455.2 C2201.0,456.0 2199.8,445.0 2203.2,442.1 C2205.1,440.4 2208.5,446.7 2210.5,445.0 C2214.4,441.5 2213.9,429.7 2216.3,430.4 C2219.2,431.1 2217.3,443.9 2222.2,447.9 C2225.5,450.6 2230.7,442.7 2234.5,445.2 C2240.3,449.0 2239.3,460.7 2243.6,461.8 C2246.8,462.7 2248.1,449.4 2251.1,449.8 C2254.2,450.1 2252.7,459.3 2257.1,463.3 C2260.9,466.7 2263.7,465.6 2269.2,466.3 C2273.9,467.0 2275.5,467.8 2279.8,466.3 C2283.6,465.0 2285.0,459.2 2287.3,460.3 C2290.4,461.9 2290.7,466.7 2291.8,472.4 C2294.1,484.4 2293.2,487.3 2294.8,499.5 C2296.6,512.4 2295.9,516.5 2299.4,528.2 C2299.9,530.1 2302.8,531.0 2303.9,529.7 C2306.9,526.2 2305.3,522.3 2308.4,517.6 C2310.7,514.1 2313.3,510.9 2315.9,511.6 C2318.7,512.3 2318.4,521.2 2320.5,520.6 C2323.2,519.9 2323.3,509.8 2326.5,508.6 C2328.8,507.7 2329.3,513.2 2332.5,516.1 C2336.8,520.0 2337.9,521.7 2343.1,523.6 C2346.1,524.8 2348.2,521.4 2350.6,523.0 C2354.3,525.5 2353.9,533.8 2356.7,532.7 C2361.4,530.7 2361.7,522.2 2367.2,516.1 C2368.5,514.7 2370.7,514.6 2371.7,516.1 C2376.1,522.1 2375.8,525.3 2379.3,532.7 C2381.9,538.2 2381.8,544.1 2385.3,544.8 C2388.6,545.4 2390.0,539.4 2394.4,535.7 C2398.1,532.6 2399.8,533.0 2403.4,529.7 C2408.0,525.5 2408.0,520.3 2412.4,519.1 C2415.5,518.3 2417.6,526.9 2420.0,525.2 C2425.0,521.5 2423.6,513.4 2429.0,507.1 C2431.1,504.6 2434.4,503.8 2436.6,505.5 C2440.5,508.6 2440.1,512.1 2442.6,517.6 C2446.2,525.7 2445.6,528.6 2450.1,535.7 C2451.7,538.1 2454.8,540.3 2456.2,538.7 C2459.5,534.9 2457.4,527.4 2460.7,523.6 C2462.1,522.0 2464.1,526.8 2466.7,526.7 C2469.5,526.5 2470.2,522.5 2472.8,523.0 C2476.4,523.8 2477.2,526.4 2480.3,529.7 C2486.0,535.5 2486.1,538.9 2492.4,543.2 C2495.0,545.0 2497.0,544.7 2499.9,543.2 C2505.2,540.6 2505.2,536.4 2510.5,534.2 C2513.4,533.0 2516.3,533.1 2518.0,535.7 C2523.0,543.3 2521.1,554.4 2525.5,556.8 C2528.5,558.5 2529.9,549.5 2534.6,544.8 C2538.0,541.3 2541.7,543.0 2543.6,538.7 C2550.5,523.3 2548.8,511.3 2554.2,501.0 C2555.6,498.4 2556.3,510.4 2558.7,510.1 C2561.8,509.7 2562.0,502.5 2566.2,499.5 C2568.7,497.8 2571.3,497.9 2573.8,499.5 C2577.4,501.9 2576.4,508.3 2579.8,508.6 C2583.9,508.9 2586.9,499.8 2590.4,501.0 C2594.4,502.5 2594.7,518.2 2596.4,514.6 C2602.1,502.8 2601.2,479.0 2607.0,466.9 C2608.7,463.4 2610.3,474.1 2613.0,479.9 C2617.1,488.7 2616.9,491.4 2622.0,499.5 C2625.1,504.3 2626.6,506.8 2631.1,508.6 C2633.4,509.5 2634.8,504.8 2637.1,505.5 C2640.9,506.8 2640.8,510.3 2644.7,513.1 C2648.8,516.2 2650.2,516.2 2654.8,518.7" fill="none" stroke="#5fd496" stroke-width="2.4" stroke-linejoin="round"/>
<path d="M187.7,677.7 C190.4,683.2 192.7,693.6 193.7,690.0 C197.2,677.5 193.9,661.4 197.8,642.0 C198.3,639.8 200.9,641.6 203.3,642.0 C204.6,642.3 205.7,644.6 206.0,643.4 C209.0,634.1 207.6,621.8 210.7,618.7 C212.6,616.9 213.9,631.4 217.0,632.4 C219.2,633.2 220.6,621.7 222.5,622.9 C225.5,624.7 224.0,634.0 228.0,639.3 C229.5,641.4 233.9,641.8 234.8,639.3 C239.5,626.4 237.2,609.3 240.3,605.0 C242.1,602.6 244.0,626.7 245.8,624.2 C248.9,619.9 247.0,603.7 251.3,590.0 C252.0,587.7 255.5,590.6 256.8,588.6 C261.0,581.9 262.1,566.7 263.6,570.8 C267.6,581.5 264.6,599.4 269.1,621.5 C270.1,626.6 275.0,634.8 275.9,631.1 C280.6,612.6 277.2,588.4 281.4,572.1 C282.5,568.0 285.4,586.4 287.7,585.8 C290.4,585.2 288.5,574.8 292.4,569.4 C294.3,566.8 299.7,571.2 300.6,568.0 C303.9,553.3 302.1,546.9 303.9,529.6 C304.8,520.7 304.0,517.8 306.6,509.9 C307.4,507.7 309.2,507.8 311.6,507.2 C313.9,506.6 315.4,505.9 317.1,507.2 C319.1,508.7 319.6,510.2 319.8,513.2 C322.7,558.6 319.8,570.4 323.9,614.6 C324.2,617.3 326.8,617.0 329.4,617.4 C331.8,617.7 333.6,614.3 334.9,616.0 C339.2,621.7 339.1,625.6 341.7,633.8 C344.1,641.1 342.4,644.2 345.8,650.3 C347.3,652.9 352.0,655.7 352.7,653.0 C357.6,633.5 354.0,623.6 358.2,600.9 C358.9,597.1 362.8,591.5 363.7,594.1 C367.2,605.0 365.0,614.6 367.8,631.1 C370.0,644.2 370.5,654.8 374.6,659.9 C376.6,662.2 379.3,644.9 381.5,647.5 C386.7,653.6 385.4,675.3 391.1,679.0 C394.7,681.4 399.2,670.1 402.0,661.2 C409.0,639.9 406.4,632.8 413.0,611.9 C413.8,609.4 415.9,610.1 418.5,609.1 C422.7,607.6 426.9,610.3 428.1,606.4 C433.6,586.9 431.5,553.0 433.6,557.1 C436.5,562.9 435.3,596.5 439.0,628.3 C440.2,638.4 442.5,640.3 444.5,650.3 C447.5,665.0 447.7,681.8 450.0,683.2 C452.0,684.3 450.0,663.6 454.1,655.7 C456.1,652.5 460.2,658.5 465.1,658.5 C470.0,658.5 475.0,660.3 476.1,655.7 C482.9,625.8 478.2,613.3 482.9,581.7 C483.2,580.0 485.4,581.0 487.0,581.7 C489.7,582.9 492.0,588.4 492.5,585.8 C496.9,564.9 493.0,552.7 498.0,529.6 C498.6,526.8 504.1,525.7 504.8,528.3 C508.9,543.0 505.5,556.7 508.9,568.0 C509.8,570.8 513.6,564.1 514.4,559.8 C518.8,536.7 517.4,513.4 520.5,507.2 C522.3,503.5 521.1,527.7 525.4,537.9 C526.4,540.3 530.3,537.5 532.2,535.1 C535.3,531.3 533.1,526.7 536.4,524.2 C538.7,522.4 543.2,522.5 544.6,525.5 C549.4,536.1 545.8,542.5 550.1,554.3 C551.3,557.9 554.3,556.9 556.9,559.8 C559.9,563.1 561.3,570.3 562.4,568.0 C565.6,561.7 563.4,552.6 566.5,540.6 C568.4,533.5 570.6,526.2 573.4,525.5 C575.5,525.0 576.2,532.2 577.5,537.9 C580.5,551.3 580.8,554.4 583.0,568.0 C586.4,589.6 586.8,615.5 590.0,616.0 C593.1,616.5 593.8,575.2 596.9,570.2 C598.7,567.2 599.2,585.6 601.0,598.2 C602.9,611.7 601.1,616.4 605.1,628.3 C606.0,631.2 608.7,630.2 611.9,631.1 C616.8,632.4 617.9,632.9 622.9,633.3 C627.2,633.6 629.6,634.9 632.5,632.4 C636.4,629.2 636.1,619.1 638.0,620.7 C641.1,623.4 641.3,643.2 643.5,642.0 C646.2,640.5 645.5,617.6 648.9,614.6 C651.1,612.7 652.5,629.6 655.8,631.1 C658.1,632.1 657.6,623.4 661.3,620.1 C663.8,617.9 667.8,616.3 669.5,618.7 C673.9,624.9 670.5,631.7 675.0,639.3 C677.3,643.2 681.6,645.8 684.6,644.2 C688.4,642.1 688.0,637.1 690.1,631.1 C693.3,621.4 694.1,608.0 696.4,609.1 C699.1,610.5 697.4,628.6 701.0,636.6 C702.0,638.7 703.8,631.9 706.5,631.6 C709.3,631.3 712.7,631.9 713.4,635.2 C718.3,660.4 715.6,668.1 718.8,694.8 C721.1,713.4 723.6,717.3 725.7,735.9 C728.5,761.1 725.7,773.2 729.8,792.1 C730.5,795.4 733.3,786.0 736.7,785.3 C739.4,784.7 741.6,790.8 743.5,789.4 C746.6,787.1 747.1,782.9 747.6,777.1 C752.1,725.5 751.6,664.5 754.5,661.9 C757.1,659.6 755.5,728.6 760.0,766.1 C760.5,770.5 764.3,760.5 765.4,755.1 C769.8,734.6 767.6,719.7 772.3,708.5 C773.8,704.9 777.6,715.6 779.1,722.2 C783.1,739.0 780.5,744.2 784.6,760.6 C785.4,763.9 789.6,762.7 790.1,766.1 C794.5,794.8 792.2,802.4 795.6,831.9 C797.4,847.4 799.6,870.6 801.6,866.2 C805.2,858.2 803.2,831.3 807.9,804.5 C808.5,801.1 812.5,796.6 813.4,799.0 C817.4,809.6 816.5,833.9 818.9,833.3 C821.5,832.6 819.9,811.7 824.4,796.2 C825.4,792.6 829.7,788.7 831.2,790.8 C835.2,796.1 834.0,811.7 836.7,812.7 C838.9,813.5 839.4,795.2 842.2,794.9 C844.9,794.6 847.8,815.5 849.0,811.3 C852.9,798.8 850.7,763.1 853.7,757.9 C855.6,754.5 855.1,778.4 860.0,792.1 C861.0,795.0 863.7,793.9 866.9,794.9 C869.9,795.8 872.9,798.9 873.7,796.2 C879.1,779.1 874.8,768.8 880.6,751.0 C881.6,747.8 885.8,748.4 888.8,749.6 C892.0,750.9 891.2,755.6 894.3,756.5 C897.3,757.4 901.5,750.6 902.5,753.8 C908.3,772.2 904.4,782.3 909.4,804.5 C910.6,810.1 912.1,812.8 916.2,815.4 C918.9,817.1 923.2,817.2 924.4,814.1 C929.4,801.1 927.4,779.8 929.9,779.8 C932.4,779.8 930.8,809.5 935.4,814.1 C938.2,816.9 940.4,801.3 946.4,796.2 C948.5,794.5 952.7,795.9 953.2,799.0 C957.3,828.0 953.2,844.3 957.3,867.5 C958.1,871.5 964.1,856.2 965.5,859.3 C970.3,869.2 969.5,902.7 971.0,896.3 C974.4,882.3 972.7,827.5 976.5,814.1 C978.3,807.7 980.6,857.9 983.4,852.4 C988.6,841.9 988.4,798.0 994.3,778.4 C995.9,773.3 996.8,794.7 1000.0,797.4 C1001.8,798.9 1003.2,787.3 1005.5,787.8 C1008.1,788.3 1007.7,797.1 1011.0,799.6 C1012.6,800.8 1014.7,798.3 1016.4,796.0 C1020.3,790.9 1019.6,785.0 1023.3,783.1 C1025.5,782.0 1027.2,789.5 1029.6,789.1 C1032.1,788.8 1031.4,783.9 1034.3,781.5 C1036.6,779.6 1039.6,781.9 1041.1,779.6 C1044.5,774.3 1044.4,771.4 1045.2,764.5 C1048.1,740.0 1047.2,734.3 1049.3,709.6 C1050.9,691.7 1049.3,685.6 1053.5,669.9 C1054.7,665.8 1059.6,668.7 1063.0,665.8 C1067.0,662.5 1066.0,658.9 1069.9,656.2 C1072.2,654.6 1074.8,654.4 1076.8,656.2 C1080.1,659.3 1079.7,668.2 1081.7,667.2 C1084.6,665.7 1084.7,652.2 1087.7,650.7 C1089.9,649.7 1089.5,658.7 1093.2,661.7 C1095.7,663.7 1100.2,664.5 1101.4,661.7 C1105.5,651.6 1102.2,645.1 1105.5,632.9 C1106.5,629.5 1108.6,627.2 1111.0,626.9 C1112.9,626.6 1114.3,628.9 1115.1,631.5 C1119.2,644.6 1117.4,652.1 1122.0,661.7 C1123.0,663.8 1126.5,660.4 1127.5,657.6 C1132.0,644.9 1129.3,639.4 1134.3,627.4 C1135.5,624.6 1140.8,627.8 1141.2,624.7 C1145.3,590.2 1141.3,576.5 1145.3,543.8 C1145.6,541.3 1148.7,546.9 1150.8,546.6 C1152.4,546.3 1152.9,544.6 1153.5,542.4 C1156.0,534.1 1154.8,528.5 1157.6,523.3 C1158.5,521.7 1160.7,525.0 1161.7,527.4 C1165.7,536.7 1165.1,547.9 1168.6,549.3 C1171.3,550.4 1171.9,535.2 1175.4,532.9 C1177.4,531.5 1177.9,540.1 1180.9,541.1 C1183.4,541.9 1184.8,536.7 1187.8,537.0 C1191.0,537.3 1191.3,540.6 1194.6,542.4 C1196.8,543.7 1199.6,546.0 1200.1,543.8 C1203.4,528.1 1200.1,513.3 1203.4,502.7 C1204.5,499.5 1207.5,511.9 1210.5,513.1 C1212.2,513.8 1213.1,509.9 1213.8,506.8 C1217.0,492.9 1216.6,489.4 1219.3,475.3 C1222.8,456.5 1224.9,430.7 1227.5,433.6 C1231.1,437.5 1228.3,471.2 1233.0,490.4 C1233.8,493.6 1237.5,487.1 1239.9,483.5 C1245.5,474.8 1245.2,466.1 1250.8,462.9 C1253.9,461.2 1256.4,467.6 1259.0,472.5 C1262.6,479.3 1262.6,481.4 1264.5,489.0 C1267.6,501.2 1267.1,504.2 1270.0,516.4 C1272.0,524.5 1272.4,533.2 1275.5,534.2 C1278.0,535.1 1278.6,526.2 1282.3,520.5 C1286.0,515.1 1287.5,510.7 1291.9,509.6 C1294.9,508.8 1295.9,513.2 1298.8,516.4 C1300.8,518.7 1302.2,518.9 1302.9,521.9 C1307.2,541.1 1306.7,565.7 1309.8,565.7 C1312.8,565.7 1311.3,540.6 1316.6,521.9 C1318.1,516.6 1320.9,516.3 1324.8,512.3 C1325.8,511.3 1327.4,512.3 1327.6,510.9 C1330.5,485.7 1327.6,475.6 1331.7,453.4 C1332.6,449.7 1340.2,449.7 1341.3,453.4 C1347.6,475.6 1343.1,488.6 1348.1,510.9 C1348.7,513.3 1351.1,509.3 1353.6,508.2 C1355.4,507.4 1356.6,505.7 1357.7,506.8 C1360.3,509.4 1359.0,514.6 1361.8,516.4 C1363.9,517.7 1366.9,516.2 1368.7,513.7 C1372.5,508.2 1372.6,496.6 1374.2,498.6 C1376.9,502.1 1374.4,517.2 1378.3,526.0 C1379.3,528.3 1382.1,523.3 1385.1,523.3 C1388.2,523.3 1390.2,523.5 1392.0,526.0 C1395.8,531.5 1394.9,534.3 1397.5,541.1 C1402.9,555.3 1407.0,577.0 1409.8,572.6 C1414.4,565.0 1410.8,540.0 1414.4,514.5 C1414.8,511.3 1417.3,511.5 1418.8,508.6 C1422.6,501.0 1421.4,495.7 1426.1,491.1 C1428.0,489.1 1430.0,494.0 1433.4,494.0 C1437.9,494.0 1440.4,494.1 1443.6,491.1 C1448.3,486.8 1448.2,477.3 1450.9,477.9 C1454.1,478.6 1454.3,486.7 1456.8,494.0 C1459.5,501.8 1461.0,514.8 1462.6,511.5 C1466.3,504.3 1464.8,488.7 1468.5,470.6 C1469.4,466.3 1471.4,460.2 1472.9,461.8 C1476.0,465.4 1474.5,477.1 1478.7,482.3 C1480.4,484.4 1483.8,480.8 1486.0,477.9 C1489.4,473.6 1488.9,465.9 1491.3,466.2 C1494.1,466.6 1494.8,479.7 1497.7,479.4 C1501.0,479.0 1503.2,471.8 1505.1,464.7 C1509.1,449.4 1509.0,445.5 1510.9,429.6 C1514.3,400.8 1513.2,394.0 1516.8,365.3 C1517.2,361.8 1517.3,359.5 1519.7,358.0 C1521.9,356.5 1525.6,360.9 1527.0,358.6 C1530.8,352.3 1528.6,347.5 1531.4,339.0 C1533.2,333.4 1535.5,325.1 1537.2,327.3 C1540.8,331.7 1539.2,344.8 1543.1,353.6 C1543.8,355.3 1546.1,352.5 1547.5,350.7 C1552.0,344.6 1552.8,336.0 1556.2,336.0 C1559.4,336.0 1558.1,345.4 1562.1,350.7 C1564.1,353.3 1566.7,351.5 1569.4,353.6 C1572.6,356.1 1572.8,360.9 1575.3,360.9 C1577.4,360.9 1578.6,357.3 1579.6,353.6 C1583.0,341.5 1581.9,329.6 1584.9,325.8 C1586.5,323.7 1586.7,334.4 1589.9,340.4 C1592.2,344.9 1593.8,345.4 1597.2,349.2 C1599.7,352.0 1600.1,354.3 1603.0,355.1 C1605.4,355.6 1607.7,354.6 1608.9,352.1 C1612.5,344.7 1611.5,333.5 1613.9,333.1 C1616.1,332.8 1614.3,345.4 1619.1,350.7 C1622.6,354.6 1628.9,349.7 1632.3,353.6 C1636.7,358.9 1635.1,363.2 1636.7,371.1 C1640.3,389.5 1639.8,393.9 1644.0,412.1 C1645.1,417.0 1646.9,424.1 1648.4,422.3 C1651.5,418.8 1650.4,409.7 1654.2,400.4 C1656.3,395.2 1658.6,389.8 1661.5,390.2 C1664.6,390.5 1665.3,403.2 1667.4,401.9 C1670.6,399.9 1671.1,391.5 1673.2,382.8 C1675.7,372.4 1674.7,364.8 1677.6,359.4 C1678.7,357.5 1679.4,364.1 1682.0,366.8 C1684.0,368.8 1685.2,369.2 1687.9,369.7 C1689.2,369.9 1690.5,369.6 1690.8,368.2 C1693.8,353.8 1691.2,343.0 1695.2,334.6 C1696.5,331.8 1700.1,344.2 1702.5,343.4 C1705.4,342.3 1705.7,336.3 1706.9,330.2 C1711.0,308.7 1711.0,290.1 1714.2,281.9 C1715.6,278.2 1716.0,294.0 1717.1,303.9 C1719.9,328.2 1717.1,338.2 1723.0,358.0 C1725.2,363.9 1734.5,356.7 1739.0,360.9 C1743.4,365.2 1742.3,369.6 1743.4,377.0 C1746.2,395.3 1744.4,410.7 1747.8,417.9 C1749.4,421.2 1752.1,399.2 1754.5,400.4 C1757.7,401.9 1759.0,428.3 1760.4,423.8 C1763.8,413.1 1761.4,378.0 1765.4,366.8 C1767.0,362.2 1769.7,378.7 1772.7,388.7 C1775.0,396.5 1775.8,398.2 1777.1,406.2 C1780.4,427.2 1779.2,444.2 1782.9,453.0 C1784.5,456.7 1784.6,438.6 1788.8,434.0 C1790.5,432.1 1794.2,440.2 1796.1,438.4 C1799.8,434.9 1800.2,418.3 1801.3,422.3 C1804.9,435.4 1802.0,456.7 1806.3,476.4 C1806.9,479.1 1809.7,471.7 1812.2,472.1 C1815.0,472.4 1815.4,476.7 1818.0,477.9 C1818.9,478.3 1819.7,477.0 1820.0,475.7 C1823.2,462.8 1821.5,458.9 1825.8,446.4 C1828.1,439.8 1831.2,433.3 1834.6,433.3 C1837.8,433.3 1836.5,442.0 1840.5,446.4 C1843.0,449.3 1845.7,447.4 1849.2,449.4 C1851.6,450.7 1852.3,455.4 1853.6,453.7 C1858.9,446.9 1858.0,436.8 1863.9,430.4 C1865.8,428.2 1869.9,437.2 1871.2,434.7 C1875.8,426.0 1874.1,418.6 1877.0,405.5 C1879.4,394.9 1878.6,391.5 1882.9,382.1 C1884.5,378.6 1887.1,376.1 1890.2,376.8 C1895.0,378.0 1895.4,383.9 1900.4,386.5 C1902.6,387.6 1905.1,387.2 1906.3,385.0 C1909.7,378.6 1907.4,371.7 1910.7,367.5 C1912.0,365.8 1914.1,372.5 1916.5,371.9 C1920.0,370.9 1921.8,362.4 1923.8,364.0 C1927.1,366.4 1924.1,375.4 1928.2,380.6 C1930.7,383.8 1935.8,379.5 1938.5,382.7 C1943.0,388.1 1942.1,391.9 1944.3,399.6 C1947.4,410.7 1946.3,414.1 1950.2,424.5 C1950.9,426.6 1953.5,428.8 1954.5,427.4 C1957.5,423.5 1958.1,408.9 1958.9,412.8 C1962.0,426.7 1959.3,448.1 1963.3,466.9 C1963.9,469.8 1966.0,462.6 1969.2,461.1 C1972.6,459.4 1976.9,463.0 1977.9,459.6 C1982.3,444.5 1979.7,437.8 1982.3,420.1 C1983.7,410.8 1982.7,405.2 1986.7,399.6 C1988.4,397.3 1994.2,405.8 1994.9,402.6 C1998.4,382.1 1995.5,371.8 1998.4,347.0 C2000.3,331.0 2001.8,327.5 2005.7,311.9 C2007.7,303.8 2007.4,300.8 2011.6,294.3 C2013.3,291.6 2017.2,294.3 2018.9,291.4 C2025.1,280.9 2026.2,261.6 2029.1,264.5 C2033.5,268.9 2031.7,302.4 2035.0,307.5 C2036.9,310.5 2037.3,286.6 2040.8,282.6 C2042.6,280.6 2046.1,288.5 2046.7,294.3 C2050.7,335.9 2048.5,345.9 2051.1,387.9 C2052.5,411.7 2052.5,417.3 2055.4,440.6 C2055.7,442.9 2058.1,447.0 2058.4,445.0 C2061.4,423.9 2058.4,411.0 2062.8,389.4 C2063.6,386.0 2070.0,386.5 2071.5,389.4 C2076.6,399.0 2075.2,404.6 2077.4,417.2 C2081.1,438.2 2081.1,443.0 2084.7,464.0 C2087.7,481.2 2087.0,494.7 2092.0,502.0 C2094.2,505.2 2098.3,494.6 2100.8,487.4 C2106.8,470.2 2106.6,454.1 2111.0,447.9 C2113.2,444.9 2113.2,458.4 2115.4,466.9 C2117.8,476.2 2119.3,489.8 2121.3,487.4 C2124.6,483.3 2122.5,467.4 2127.1,452.3 C2129.7,443.7 2134.6,443.3 2137.3,434.7 C2142.5,418.3 2139.5,411.0 2144.7,396.7 C2145.5,394.5 2149.3,396.0 2150.5,398.2 C2155.9,407.8 2156.6,411.5 2159.3,423.0 C2165.1,447.7 2164.1,465.7 2169.5,478.6 C2171.3,482.8 2171.2,468.0 2175.4,461.1 C2179.1,454.8 2184.1,447.2 2187.1,449.4 C2191.3,452.5 2190.5,462.1 2191.5,472.8 C2194.5,507.4 2193.1,515.3 2195.8,550.0 C2196.4,557.4 2197.7,568.4 2198.9,566.3 C2201.0,562.6 2201.1,538.1 2203.3,537.0 C2205.1,536.1 2204.7,560.0 2207.7,561.9 C2209.9,563.3 2211.0,546.3 2215.0,544.3 C2217.6,543.0 2220.5,557.9 2222.3,554.6 C2229.0,542.1 2229.2,515.8 2234.0,509.2 C2236.4,505.9 2236.4,522.1 2238.4,532.6 C2240.3,543.2 2240.5,545.6 2242.8,556.0 C2243.8,560.7 2244.9,561.6 2245.7,566.3 C2250.2,593.2 2248.7,599.6 2254.5,626.2 C2263.1,666.1 2267.4,674.5 2277.9,714.0 C2284.5,739.0 2283.7,745.6 2292.5,769.6 C2295.5,777.9 2299.9,785.6 2304.2,785.6 C2307.8,785.6 2307.8,776.9 2310.0,769.6 C2315.7,751.3 2316.4,747.0 2321.7,728.6 C2325.4,715.7 2321.7,698.6 2330.0,700.0 C2355.7,703.7 2368.5,722.0 2400.0,740.0 C2425.2,754.4 2436.9,776.8 2456.0,772.0 C2472.9,767.8 2463.3,738.3 2480.0,720.0 C2501.1,696.9 2513.8,699.1 2540.0,680.0 C2563.3,663.1 2566.5,655.9 2590.0,640.0 C2595.7,636.1 2598.3,636.6 2605.0,636.0 C2607.7,635.7 2609.0,636.3 2611.0,638.0 C2613.0,639.6 2612.0,641.8 2614.0,643.4 C2616.3,645.2 2618.7,643.3 2620.7,645.6 C2625.7,651.3 2626.2,653.8 2629.5,661.0 C2633.1,669.1 2634.0,671.0 2636.0,679.6 C2638.4,689.8 2638.4,692.3 2639.4,702.7 C2641.0,718.4 2639.8,727.9 2641.8,737.8 C2642.3,740.2 2643.2,733.3 2644.9,730.0 C2646.4,727.1 2646.5,725.6 2649.0,724.0 C2651.0,722.7 2652.2,723.7 2654.8,723.5" fill="none" stroke="#f6cf6b" stroke-width="2.2" stroke-linejoin="round"/>
<line x1="184.7" y1="525" x2="2655" y2="525" stroke="#e8e8e8" stroke-width="2" stroke-dasharray="8 4"/>
<line x1="2655" y1="195.8" x2="2655" y2="996" stroke="#a8a8a8" stroke-width="2" stroke-dasharray="8 4"/>
<circle cx="2654.2" cy="518.7" r="8.5" fill="#ffffff" stroke="#5ec389" stroke-width="3.3"/>
<circle cx="2654.2" cy="723.7" r="8.7" fill="#ffffff" stroke="#e5bb5f" stroke-width="3.6"/>
<path transform="translate(2450,912) scale(0.05848)" fill="#a4a6a8" d="M290,230 L300,160 Q320,115 350,140 L372,168 Q500,128 640,160 L662,132 Q690,112 702,150 L715,236 Q800,245 850,300 Q888,345 880,382 Q830,392 790,392 Q800,560 700,642 L682,664 Q760,690 770,760 Q762,830 690,842 L690,948 Q662,996 600,992 Q540,986 530,905 L500,892 Q482,986 410,1000 Q362,982 342,902 L320,918 Q262,948 226,988 Q282,952 332,906 Q262,852 255,762 Q262,692 336,666 L322,652 Q200,562 206,392 Q160,392 110,378 Q120,300 172,266 Q222,240 290,230 Z"/>
<rect x="2176" y="1035.8" width="485.7" height="120.2" fill="#080c18"/>
<path d="M189.5,1130.7 L202.3,1131.4 L207.1,1133.3 L218.2,1132.3 L259.6,1130.7 L358.3,1130.7 L371.0,1129.1 L406.0,1129.1 L412.4,1130.1 L456.9,1129.1 L479.2,1126.9 L498.3,1125.0 L523.8,1124.4 L530.2,1121.2 L539.7,1120.5 L549.3,1116.4 L554.0,1110.7 L558.8,1113.9 L562.0,1112.6 L573.1,1116.4 L584.3,1113.2 L592.2,1106.8 L597.0,1106.2 L603.4,1100.5 L608.1,1106.8 L619.3,1105.3 L627.2,1098.9 L633.6,1100.5 L641.6,1103.7 L647.9,1099.5 L663.8,1097.3 L673.4,1104.3 L682.9,1100.5 L690.9,1099.5 L702.0,1112.6 L708.4,1114.8 L714.8,1113.2 L727.5,1115.8 L732.3,1111.6 L743.4,1115.8 L772.1,1117.0 L786.4,1110.0 L795.9,1107.8 L807.1,1106.8 L816.6,1105.3 L826.2,1104.6 L834.1,1107.5 L842.1,1106.8 L846.9,1110.0 L854.8,1108.4 L862.8,1103.7 L877.1,1097.3 L889.9,1097.3 L899.4,1095.1 L907.4,1097.3 L912.1,1099.8 L924.9,1098.9 L929.6,1105.3 L944.0,1106.8 L953.5,1104.6 L969.4,1110.0 L979.0,1109.4 L985.3,1113.2 L994.8,1113.2 L999.5,1109.4 L1004.3,1108.4 L1012.3,1109.4 L1017.1,1112.6 L1023.4,1111.6 L1026.6,1108.4 L1031.4,1111.6 L1040.9,1111.6 L1050.5,1109.4 L1060.0,1106.8 L1068.0,1107.8 L1074.4,1110.7 L1085.5,1110.7 L1101.4,1113.2 L1107.8,1118.0 L1115.7,1117.0 L1130.1,1118.0 L1134.8,1116.4 L1142.8,1118.0 L1150.8,1124.4 L1168.3,1123.4 L1181.0,1123.7 L1190.5,1121.8 L1212.8,1121.2 L1222.4,1122.8 L1244.7,1124.4 L1251.0,1122.1 L1257.4,1124.4 L1276.5,1123.7 L1308.3,1123.4 L1314.7,1123.4 L1321.1,1125.9 L1340.2,1125.9 L1384.7,1125.3 L1392.7,1123.4 L1403.8,1121.8 L1432.5,1121.2 L1454.7,1123.4 L1464.3,1119.6 L1492.9,1117.4 L1505.7,1118.9 L1518.4,1118.0 L1528.0,1119.6 L1563.0,1120.5 L1575.7,1117.4 L1636.2,1117.4 L1642.6,1119.6 L1664.8,1120.2 L1706.2,1118.9 L1719.0,1115.4 L1754.0,1113.2 L1766.7,1108.4 L1795.3,1109.4 L1808.1,1106.8 L1813.7,1110.0 L1822.2,1111.1 L1837.6,1109.4 L1851.2,1104.2 L1859.8,1103.9 L1870.0,1094.7 L1880.3,1091.9 L1890.5,1094.7 L1897.4,1092.3 L1912.7,1093.0 L1919.6,1097.4 L1928.1,1095.3 L1936.7,1098.8 L1943.5,1096.4 L1955.4,1094.0 L1977.7,1091.9 L1998.2,1097.4 L2008.4,1097.4 L2013.5,1099.8 L2022.1,1099.8 L2032.3,1094.0 L2039.2,1094.0 L2049.4,1102.2 L2059.7,1098.8 L2069.9,1097.4 L2083.6,1102.2 L2100.6,1096.4 L2110.9,1096.4 L2124.6,1097.4 L2133.1,1094.0 L2145.1,1093.0 L2155.3,1090.6 L2160.4,1080.3 L2167.3,1079.3 L2172.4,1075.2 L2179.2,1076.6 L2189.5,1074.2 L2201.4,1070.7 L2210.0,1075.9 L2223.6,1073.5 L2232.2,1075.9 L2240.7,1071.4 L2254.4,1072.5 L2261.2,1075.9 L2278.3,1075.9 L2283.4,1082.7 L2292.0,1081.0 L2297.1,1084.4 L2315.9,1082.7 L2329.6,1087.8 L2336.4,1083.7 L2344.9,1082.7 L2350.1,1077.6 L2360.3,1075.9 L2367.1,1071.4 L2380.8,1066.6 L2394.5,1071.4 L2403.0,1069.0 L2415.0,1070.7 L2428.6,1069.0 L2438.9,1062.2 L2459.4,1062.2 L2466.2,1064.6 L2476.5,1061.2 L2497.0,1067.3 L2510.6,1064.6 L2520.9,1064.6 L2529.4,1066.6 L2538.0,1059.5 L2544.8,1061.2 L2551.6,1069.0 L2561.9,1065.6 L2572.1,1072.5 L2582.4,1074.2 L2592.6,1082.7 L2602.9,1079.3 L2620.0,1079.3 L2630.2,1081.7 L2643.9,1079.3 L2654.1,1075.9 L2660.9,1080.3 L2660.9,1155.5 L189.5,1155.5 Z" fill="#0c1121"/>
<clipPath id="sel"><rect x="2176" y="1035.8" width="485.7" height="120.2"/></clipPath>
<path d="M189.5,1130.7 L202.3,1131.4 L207.1,1133.3 L218.2,1132.3 L259.6,1130.7 L358.3,1130.7 L371.0,1129.1 L406.0,1129.1 L412.4,1130.1 L456.9,1129.1 L479.2,1126.9 L498.3,1125.0 L523.8,1124.4 L530.2,1121.2 L539.7,1120.5 L549.3,1116.4 L554.0,1110.7 L558.8,1113.9 L562.0,1112.6 L573.1,1116.4 L584.3,1113.2 L592.2,1106.8 L597.0,1106.2 L603.4,1100.5 L608.1,1106.8 L619.3,1105.3 L627.2,1098.9 L633.6,1100.5 L641.6,1103.7 L647.9,1099.5 L663.8,1097.3 L673.4,1104.3 L682.9,1100.5 L690.9,1099.5 L702.0,1112.6 L708.4,1114.8 L714.8,1113.2 L727.5,1115.8 L732.3,1111.6 L743.4,1115.8 L772.1,1117.0 L786.4,1110.0 L795.9,1107.8 L807.1,1106.8 L816.6,1105.3 L826.2,1104.6 L834.1,1107.5 L842.1,1106.8 L846.9,1110.0 L854.8,1108.4 L862.8,1103.7 L877.1,1097.3 L889.9,1097.3 L899.4,1095.1 L907.4,1097.3 L912.1,1099.8 L924.9,1098.9 L929.6,1105.3 L944.0,1106.8 L953.5,1104.6 L969.4,1110.0 L979.0,1109.4 L985.3,1113.2 L994.8,1113.2 L999.5,1109.4 L1004.3,1108.4 L1012.3,1109.4 L1017.1,1112.6 L1023.4,1111.6 L1026.6,1108.4 L1031.4,1111.6 L1040.9,1111.6 L1050.5,1109.4 L1060.0,1106.8 L1068.0,1107.8 L1074.4,1110.7 L1085.5,1110.7 L1101.4,1113.2 L1107.8,1118.0 L1115.7,1117.0 L1130.1,1118.0 L1134.8,1116.4 L1142.8,1118.0 L1150.8,1124.4 L1168.3,1123.4 L1181.0,1123.7 L1190.5,1121.8 L1212.8,1121.2 L1222.4,1122.8 L1244.7,1124.4 L1251.0,1122.1 L1257.4,1124.4 L1276.5,1123.7 L1308.3,1123.4 L1314.7,1123.4 L1321.1,1125.9 L1340.2,1125.9 L1384.7,1125.3 L1392.7,1123.4 L1403.8,1121.8 L1432.5,1121.2 L1454.7,1123.4 L1464.3,1119.6 L1492.9,1117.4 L1505.7,1118.9 L1518.4,1118.0 L1528.0,1119.6 L1563.0,1120.5 L1575.7,1117.4 L1636.2,1117.4 L1642.6,1119.6 L1664.8,1120.2 L1706.2,1118.9 L1719.0,1115.4 L1754.0,1113.2 L1766.7,1108.4 L1795.3,1109.4 L1808.1,1106.8 L1813.7,1110.0 L1822.2,1111.1 L1837.6,1109.4 L1851.2,1104.2 L1859.8,1103.9 L1870.0,1094.7 L1880.3,1091.9 L1890.5,1094.7 L1897.4,1092.3 L1912.7,1093.0 L1919.6,1097.4 L1928.1,1095.3 L1936.7,1098.8 L1943.5,1096.4 L1955.4,1094.0 L1977.7,1091.9 L1998.2,1097.4 L2008.4,1097.4 L2013.5,1099.8 L2022.1,1099.8 L2032.3,1094.0 L2039.2,1094.0 L2049.4,1102.2 L2059.7,1098.8 L2069.9,1097.4 L2083.6,1102.2 L2100.6,1096.4 L2110.9,1096.4 L2124.6,1097.4 L2133.1,1094.0 L2145.1,1093.0 L2155.3,1090.6 L2160.4,1080.3 L2167.3,1079.3 L2172.4,1075.2 L2179.2,1076.6 L2189.5,1074.2 L2201.4,1070.7 L2210.0,1075.9 L2223.6,1073.5 L2232.2,1075.9 L2240.7,1071.4 L2254.4,1072.5 L2261.2,1075.9 L2278.3,1075.9 L2283.4,1082.7 L2292.0,1081.0 L2297.1,1084.4 L2315.9,1082.7 L2329.6,1087.8 L2336.4,1083.7 L2344.9,1082.7 L2350.1,1077.6 L2360.3,1075.9 L2367.1,1071.4 L2380.8,1066.6 L2394.5,1071.4 L2403.0,1069.0 L2415.0,1070.7 L2428.6,1069.0 L2438.9,1062.2 L2459.4,1062.2 L2466.2,1064.6 L2476.5,1061.2 L2497.0,1067.3 L2510.6,1064.6 L2520.9,1064.6 L2529.4,1066.6 L2538.0,1059.5 L2544.8,1061.2 L2551.6,1069.0 L2561.9,1065.6 L2572.1,1072.5 L2582.4,1074.2 L2592.6,1082.7 L2602.9,1079.3 L2620.0,1079.3 L2630.2,1081.7 L2643.9,1079.3 L2654.1,1075.9 L2660.9,1080.3 L2660.9,1155.5 L189.5,1155.5 Z" fill="#232a45" clip-path="url(#sel)"/>
<path d="M189.5,1130.7 L202.3,1131.4 L207.1,1133.3 L218.2,1132.3 L259.6,1130.7 L358.3,1130.7 L371.0,1129.1 L406.0,1129.1 L412.4,1130.1 L456.9,1129.1 L479.2,1126.9 L498.3,1125.0 L523.8,1124.4 L530.2,1121.2 L539.7,1120.5 L549.3,1116.4 L554.0,1110.7 L558.8,1113.9 L562.0,1112.6 L573.1,1116.4 L584.3,1113.2 L592.2,1106.8 L597.0,1106.2 L603.4,1100.5 L608.1,1106.8 L619.3,1105.3 L627.2,1098.9 L633.6,1100.5 L641.6,1103.7 L647.9,1099.5 L663.8,1097.3 L673.4,1104.3 L682.9,1100.5 L690.9,1099.5 L702.0,1112.6 L708.4,1114.8 L714.8,1113.2 L727.5,1115.8 L732.3,1111.6 L743.4,1115.8 L772.1,1117.0 L786.4,1110.0 L795.9,1107.8 L807.1,1106.8 L816.6,1105.3 L826.2,1104.6 L834.1,1107.5 L842.1,1106.8 L846.9,1110.0 L854.8,1108.4 L862.8,1103.7 L877.1,1097.3 L889.9,1097.3 L899.4,1095.1 L907.4,1097.3 L912.1,1099.8 L924.9,1098.9 L929.6,1105.3 L944.0,1106.8 L953.5,1104.6 L969.4,1110.0 L979.0,1109.4 L985.3,1113.2 L994.8,1113.2 L999.5,1109.4 L1004.3,1108.4 L1012.3,1109.4 L1017.1,1112.6 L1023.4,1111.6 L1026.6,1108.4 L1031.4,1111.6 L1040.9,1111.6 L1050.5,1109.4 L1060.0,1106.8 L1068.0,1107.8 L1074.4,1110.7 L1085.5,1110.7 L1101.4,1113.2 L1107.8,1118.0 L1115.7,1117.0 L1130.1,1118.0 L1134.8,1116.4 L1142.8,1118.0 L1150.8,1124.4 L1168.3,1123.4 L1181.0,1123.7 L1190.5,1121.8 L1212.8,1121.2 L1222.4,1122.8 L1244.7,1124.4 L1251.0,1122.1 L1257.4,1124.4 L1276.5,1123.7 L1308.3,1123.4 L1314.7,1123.4 L1321.1,1125.9 L1340.2,1125.9 L1384.7,1125.3 L1392.7,1123.4 L1403.8,1121.8 L1432.5,1121.2 L1454.7,1123.4 L1464.3,1119.6 L1492.9,1117.4 L1505.7,1118.9 L1518.4,1118.0 L1528.0,1119.6 L1563.0,1120.5 L1575.7,1117.4 L1636.2,1117.4 L1642.6,1119.6 L1664.8,1120.2 L1706.2,1118.9 L1719.0,1115.4 L1754.0,1113.2 L1766.7,1108.4 L1795.3,1109.4 L1808.1,1106.8 L1813.7,1110.0 L1822.2,1111.1 L1837.6,1109.4 L1851.2,1104.2 L1859.8,1103.9 L1870.0,1094.7 L1880.3,1091.9 L1890.5,1094.7 L1897.4,1092.3 L1912.7,1093.0 L1919.6,1097.4 L1928.1,1095.3 L1936.7,1098.8 L1943.5,1096.4 L1955.4,1094.0 L1977.7,1091.9 L1998.2,1097.4 L2008.4,1097.4 L2013.5,1099.8 L2022.1,1099.8 L2032.3,1094.0 L2039.2,1094.0 L2049.4,1102.2 L2059.7,1098.8 L2069.9,1097.4 L2083.6,1102.2 L2100.6,1096.4 L2110.9,1096.4 L2124.6,1097.4 L2133.1,1094.0 L2145.1,1093.0 L2155.3,1090.6 L2160.4,1080.3 L2167.3,1079.3 L2172.4,1075.2 L2179.2,1076.6 L2189.5,1074.2 L2201.4,1070.7 L2210.0,1075.9 L2223.6,1073.5 L2232.2,1075.9 L2240.7,1071.4 L2254.4,1072.5 L2261.2,1075.9 L2278.3,1075.9 L2283.4,1082.7 L2292.0,1081.0 L2297.1,1084.4 L2315.9,1082.7 L2329.6,1087.8 L2336.4,1083.7 L2344.9,1082.7 L2350.1,1077.6 L2360.3,1075.9 L2367.1,1071.4 L2380.8,1066.6 L2394.5,1071.4 L2403.0,1069.0 L2415.0,1070.7 L2428.6,1069.0 L2438.9,1062.2 L2459.4,1062.2 L2466.2,1064.6 L2476.5,1061.2 L2497.0,1067.3 L2510.6,1064.6 L2520.9,1064.6 L2529.4,1066.6 L2538.0,1059.5 L2544.8,1061.2 L2551.6,1069.0 L2561.9,1065.6 L2572.1,1072.5 L2582.4,1074.2 L2592.6,1082.7 L2602.9,1079.3 L2620.0,1079.3 L2630.2,1081.7 L2643.9,1079.3 L2654.1,1075.9 L2660.9,1080.3" fill="none" stroke="#4466c4" stroke-width="1.2"/>
<path d="M189.5,1130.7 L202.3,1131.4 L207.1,1133.3 L218.2,1132.3 L259.6,1130.7 L358.3,1130.7 L371.0,1129.1 L406.0,1129.1 L412.4,1130.1 L456.9,1129.1 L479.2,1126.9 L498.3,1125.0 L523.8,1124.4 L530.2,1121.2 L539.7,1120.5 L549.3,1116.4 L554.0,1110.7 L558.8,1113.9 L562.0,1112.6 L573.1,1116.4 L584.3,1113.2 L592.2,1106.8 L597.0,1106.2 L603.4,1100.5 L608.1,1106.8 L619.3,1105.3 L627.2,1098.9 L633.6,1100.5 L641.6,1103.7 L647.9,1099.5 L663.8,1097.3 L673.4,1104.3 L682.9,1100.5 L690.9,1099.5 L702.0,1112.6 L708.4,1114.8 L714.8,1113.2 L727.5,1115.8 L732.3,1111.6 L743.4,1115.8 L772.1,1117.0 L786.4,1110.0 L795.9,1107.8 L807.1,1106.8 L816.6,1105.3 L826.2,1104.6 L834.1,1107.5 L842.1,1106.8 L846.9,1110.0 L854.8,1108.4 L862.8,1103.7 L877.1,1097.3 L889.9,1097.3 L899.4,1095.1 L907.4,1097.3 L912.1,1099.8 L924.9,1098.9 L929.6,1105.3 L944.0,1106.8 L953.5,1104.6 L969.4,1110.0 L979.0,1109.4 L985.3,1113.2 L994.8,1113.2 L999.5,1109.4 L1004.3,1108.4 L1012.3,1109.4 L1017.1,1112.6 L1023.4,1111.6 L1026.6,1108.4 L1031.4,1111.6 L1040.9,1111.6 L1050.5,1109.4 L1060.0,1106.8 L1068.0,1107.8 L1074.4,1110.7 L1085.5,1110.7 L1101.4,1113.2 L1107.8,1118.0 L1115.7,1117.0 L1130.1,1118.0 L1134.8,1116.4 L1142.8,1118.0 L1150.8,1124.4 L1168.3,1123.4 L1181.0,1123.7 L1190.5,1121.8 L1212.8,1121.2 L1222.4,1122.8 L1244.7,1124.4 L1251.0,1122.1 L1257.4,1124.4 L1276.5,1123.7 L1308.3,1123.4 L1314.7,1123.4 L1321.1,1125.9 L1340.2,1125.9 L1384.7,1125.3 L1392.7,1123.4 L1403.8,1121.8 L1432.5,1121.2 L1454.7,1123.4 L1464.3,1119.6 L1492.9,1117.4 L1505.7,1118.9 L1518.4,1118.0 L1528.0,1119.6 L1563.0,1120.5 L1575.7,1117.4 L1636.2,1117.4 L1642.6,1119.6 L1664.8,1120.2 L1706.2,1118.9 L1719.0,1115.4 L1754.0,1113.2 L1766.7,1108.4 L1795.3,1109.4 L1808.1,1106.8 L1813.7,1110.0 L1822.2,1111.1 L1837.6,1109.4 L1851.2,1104.2 L1859.8,1103.9 L1870.0,1094.7 L1880.3,1091.9 L1890.5,1094.7 L1897.4,1092.3 L1912.7,1093.0 L1919.6,1097.4 L1928.1,1095.3 L1936.7,1098.8 L1943.5,1096.4 L1955.4,1094.0 L1977.7,1091.9 L1998.2,1097.4 L2008.4,1097.4 L2013.5,1099.8 L2022.1,1099.8 L2032.3,1094.0 L2039.2,1094.0 L2049.4,1102.2 L2059.7,1098.8 L2069.9,1097.4 L2083.6,1102.2 L2100.6,1096.4 L2110.9,1096.4 L2124.6,1097.4 L2133.1,1094.0 L2145.1,1093.0 L2155.3,1090.6 L2160.4,1080.3 L2167.3,1079.3 L2172.4,1075.2 L2179.2,1076.6 L2189.5,1074.2 L2201.4,1070.7 L2210.0,1075.9 L2223.6,1073.5 L2232.2,1075.9 L2240.7,1071.4 L2254.4,1072.5 L2261.2,1075.9 L2278.3,1075.9 L2283.4,1082.7 L2292.0,1081.0 L2297.1,1084.4 L2315.9,1082.7 L2329.6,1087.8 L2336.4,1083.7 L2344.9,1082.7 L2350.1,1077.6 L2360.3,1075.9 L2367.1,1071.4 L2380.8,1066.6 L2394.5,1071.4 L2403.0,1069.0 L2415.0,1070.7 L2428.6,1069.0 L2438.9,1062.2 L2459.4,1062.2 L2466.2,1064.6 L2476.5,1061.2 L2497.0,1067.3 L2510.6,1064.6 L2520.9,1064.6 L2529.4,1066.6 L2538.0,1059.5 L2544.8,1061.2 L2551.6,1069.0 L2561.9,1065.6 L2572.1,1072.5 L2582.4,1074.2 L2592.6,1082.7 L2602.9,1079.3 L2620.0,1079.3 L2630.2,1081.7 L2643.9,1079.3 L2654.1,1075.9 L2660.9,1080.3" fill="none" stroke="#7390e0" stroke-width="1.2" clip-path="url(#sel)"/>
<rect x="2162.8" y="1081.2" width="29.4" height="34.5" rx="11" fill="#3b3d4b" fill-opacity="0.92"/>
<rect x="2172.6" y="1092.7" width="3" height="12.1" fill="#b9bbc2"/>
<rect x="2179.6" y="1092.7" width="3" height="12.1" fill="#b9bbc2"/>
<rect x="2645.8" y="1081.2" width="29.4" height="34.5" rx="11" fill="#3b3d4b" fill-opacity="0.92"/>
<rect x="2655.6" y="1092.7" width="3" height="12.1" fill="#b9bbc2"/>
<rect x="2662.6" y="1092.7" width="3" height="12.1" fill="#b9bbc2"/>
</svg>
<div class="t" style="left:205.07px;top:1009.78px;font-size:24.826px;font-weight:normal;color:#acacac;transform:scaleX(0.9400);-webkit-text-stroke:0.30px #acacac">4 Dec</div>
<div class="t" style="left:297.51px;top:1009.78px;font-size:24.826px;font-weight:normal;color:#acacac;transform:scaleX(0.9400);-webkit-text-stroke:0.30px #acacac">21 Dec</div>
<div class="t" style="left:405.69px;top:1009.78px;font-size:24.826px;font-weight:normal;color:#acacac;transform:scaleX(0.9400);-webkit-text-stroke:0.30px #acacac">7 Jan</div>
<div class="t" style="left:498.48px;top:1009.78px;font-size:24.826px;font-weight:normal;color:#acacac;transform:scaleX(0.9400);-webkit-text-stroke:0.30px #acacac">24 Jan</div>
<div class="t" style="left:595.93px;top:1009.78px;font-size:24.826px;font-weight:normal;color:#acacac;transform:scaleX(0.9400);-webkit-text-stroke:0.30px #acacac">10 Feb</div>
<div class="t" style="left:695.60px;top:1009.78px;font-size:24.826px;font-weight:normal;color:#acacac;transform:scaleX(0.9400);-webkit-text-stroke:0.30px #acacac">27 Feb</div>
<div class="t" style="left:794.22px;top:1009.78px;font-size:24.826px;font-weight:normal;color:#acacac;transform:scaleX(0.9400);-webkit-text-stroke:0.30px #acacac">16 Mar</div>
<div class="t" style="left:902.99px;top:1009.78px;font-size:24.826px;font-weight:normal;color:#acacac;transform:scaleX(0.9400);-webkit-text-stroke:0.30px #acacac">2 Apr</div>
<div class="t" style="left:995.55px;top:1009.78px;font-size:24.826px;font-weight:normal;color:#acacac;transform:scaleX(0.9400);-webkit-text-stroke:0.30px #acacac">19 Apr</div>
<div class="t" style="left:1096.97px;top:1009.78px;font-size:24.826px;font-weight:normal;color:#acacac;transform:scaleX(0.9400);-webkit-text-stroke:0.30px #acacac">6 May</div>
<div class="t" style="left:1189.75px;top:1009.78px;font-size:24.826px;font-weight:normal;color:#acacac;transform:scaleX(0.9400);-webkit-text-stroke:0.30px #acacac">23 May</div>
<div class="t" style="left:1299.57px;top:1009.78px;font-size:24.826px;font-weight:normal;color:#acacac;transform:scaleX(0.9400);-webkit-text-stroke:0.30px #acacac">9 Jun</div>
<div class="t" style="left:1392.36px;top:1009.78px;font-size:24.826px;font-weight:normal;color:#acacac;transform:scaleX(0.9400);-webkit-text-stroke:0.30px #acacac">26 Jun</div>
<div class="t" style="left:1495.30px;top:1009.78px;font-size:24.826px;font-weight:normal;color:#acacac;transform:scaleX(0.9400);-webkit-text-stroke:0.30px #acacac">13 Jul</div>
<div class="t" style="left:1595.08px;top:1009.78px;font-size:24.826px;font-weight:normal;color:#acacac;transform:scaleX(0.9400);-webkit-text-stroke:0.30px #acacac">30 Jul</div>
<div class="t" style="left:1688.69px;top:1009.78px;font-size:24.826px;font-weight:normal;color:#acacac;transform:scaleX(0.9400);-webkit-text-stroke:0.30px #acacac">16 Aug</div>
<div class="t" style="left:1793.96px;top:1009.78px;font-size:24.826px;font-weight:normal;color:#acacac;transform:scaleX(0.9400);-webkit-text-stroke:0.30px #acacac">2 Sep</div>
<div class="t" style="left:1886.39px;top:1009.78px;font-size:24.826px;font-weight:normal;color:#acacac;transform:scaleX(0.9400);-webkit-text-stroke:0.30px #acacac">19 Sep</div>
<div class="t" style="left:1994.81px;top:1009.78px;font-size:24.826px;font-weight:normal;color:#acacac;transform:scaleX(0.9400);-webkit-text-stroke:0.30px #acacac">6 Oct</div>
<div class="t" style="left:2087.60px;top:1009.78px;font-size:24.826px;font-weight:normal;color:#acacac;transform:scaleX(0.9400);-webkit-text-stroke:0.30px #acacac">23 Oct</div>
<div class="t" style="left:2190.77px;top:1009.78px;font-size:24.826px;font-weight:normal;color:#acacac;transform:scaleX(0.9400);-webkit-text-stroke:0.30px #acacac">9 Nov</div>
<div class="t" style="left:2283.67px;top:1009.78px;font-size:24.826px;font-weight:normal;color:#acacac;transform:scaleX(0.9400);-webkit-text-stroke:0.30px #acacac">26 Nov</div>
<div class="t" style="left:2382.88px;top:1009.78px;font-size:24.826px;font-weight:normal;color:#acacac;transform:scaleX(0.9400);-webkit-text-stroke:0.30px #acacac">13 Dec</div>
<div class="t" style="left:2482.66px;top:1009.78px;font-size:24.826px;font-weight:normal;color:#acacac;transform:scaleX(0.9400);-webkit-text-stroke:0.30px #acacac">31 Dec</div>
<div style="position:absolute;left:77.7px;top:502.1px;width:101.2px;height:43.9px;background:#000;border-radius:6px"></div>
<div style="position:absolute;left:2663.8px;top:502.1px;width:140px;height:44px;background:#000;border-radius:6px"></div>
<div style="position:absolute;left:2186px;top:566px;width:425.5px;height:209.7px;background:#05070b;border-radius:14px;box-shadow:0 16px 70px rgba(0,0,0,0.5)"></div>
<div style="position:absolute;left:2216px;top:671.1px;width:13.5px;height:13.5px;border-radius:50%;background:#e3b95c;border:3.25px solid #d8dde6"></div>
<div style="position:absolute;left:2216px;top:715.1px;width:13.5px;height:13.5px;border-radius:50%;background:#5ec389;border:3.25px solid #d8dde6"></div>
<div style="position:absolute;left:2541px;top:1002.3px;width:226px;height:42.7px;background:#000;border-radius:6px"></div>
<div style="position:absolute;left:1251.1px;top:131.1px;width:20.6px;height:19.8px;background:#e5bb5f"></div>
<div style="position:absolute;left:1410.3px;top:131.1px;width:20.6px;height:19.8px;background:#5ec389"></div>
<div style="position:absolute;left:2791.6px;top:1025px;width:1.6px;height:42px;background:#66686e"></div>
<div class="t" style="left:25.86px;top:28.74px;font-size:41.652px;font-weight:bold;color:#f0f2f7;transform:scaleX(0.9320);-webkit-text-stroke:1.40px #f0f2f7">Bitcoin Open Interest (USD)</div>
<div class="t" style="left:1280.56px;top:127.66px;font-size:23.913px;font-weight:normal;color:#ffffff;transform:scaleX(0.9610)">BTC Price</div>
<div class="t" style="left:1439.96px;top:127.66px;font-size:23.913px;font-weight:normal;color:#ffffff;transform:scaleX(1.0364)">Open Interest</div>
<div class="t" style="left:70.36px;top:182.43px;font-size:24.246px;font-weight:normal;color:#acacac;transform:scaleX(0.9450);-webkit-text-stroke:0.30px #acacac">$100.00B</div>
<div class="t" style="left:83.19px;top:342.18px;font-size:24.246px;font-weight:normal;color:#acacac;transform:scaleX(0.9450);-webkit-text-stroke:0.30px #acacac">$80.00B</div>
<div class="t" style="left:83.19px;top:661.68px;font-size:24.246px;font-weight:normal;color:#acacac;transform:scaleX(0.9450);-webkit-text-stroke:0.30px #acacac">$40.00B</div>
<div class="t" style="left:83.19px;top:821.48px;font-size:24.246px;font-weight:normal;color:#acacac;transform:scaleX(0.9450);-webkit-text-stroke:0.30px #acacac">$20.00B</div>
<div class="t" style="left:142.76px;top:981.08px;font-size:24.246px;font-weight:normal;color:#acacac;transform:scaleX(0.9450);-webkit-text-stroke:0.30px #acacac">$0</div>
<div class="t" style="left:2674.01px;top:182.48px;font-size:24.246px;font-weight:normal;color:#acacac;transform:scaleX(0.9450);-webkit-text-stroke:0.30px #acacac">$130.00K</div>
<div class="t" style="left:2674.01px;top:312.58px;font-size:24.246px;font-weight:normal;color:#acacac;transform:scaleX(0.9450);-webkit-text-stroke:0.30px #acacac">$120.00K</div>
<div class="t" style="left:2674.01px;top:442.68px;font-size:24.246px;font-weight:normal;color:#acacac;transform:scaleX(0.9450);-webkit-text-stroke:0.30px #acacac">$110.00K</div>
<div class="t" style="left:2674.01px;top:572.78px;font-size:24.246px;font-weight:normal;color:#acacac;transform:scaleX(0.9450);-webkit-text-stroke:0.30px #acacac">$100.00K</div>
<div class="t" style="left:2674.01px;top:702.88px;font-size:24.246px;font-weight:normal;color:#acacac;transform:scaleX(0.9450);-webkit-text-stroke:0.30px #acacac">$90.00K</div>
<div class="t" style="left:2674.01px;top:832.98px;font-size:24.246px;font-weight:normal;color:#acacac;transform:scaleX(0.9450);-webkit-text-stroke:0.30px #acacac">$80.00K</div>
<div class="t" style="left:2674.01px;top:963.08px;font-size:24.246px;font-weight:normal;color:#acacac;transform:scaleX(0.9450);-webkit-text-stroke:0.30px #acacac">$70.00K</div>
<div class="t" style="left:92.11px;top:510.60px;font-size:23.986px;font-weight:normal;color:#ffffff;transform:scaleX(0.9512);-webkit-text-stroke:0.50px #ffffff">58.97B</div>
<div class="t" style="left:2678.21px;top:510.60px;font-size:23.986px;font-weight:normal;color:#ffffff;transform:scaleX(0.9472);-webkit-text-stroke:0.50px #ffffff">104,825.19</div>
<div class="t" style="left:2216.48px;top:602.15px;font-size:30.652px;font-weight:normal;color:#ffffff;transform:scaleX(0.9413);-webkit-text-stroke:0.50px #ffffff">23 Jan 2026, 03:00</div>
<div class="t" style="left:2244.17px;top:666.22px;font-size:30.333px;font-weight:normal;color:#d3d8e0;transform:scaleX(0.9336);-webkit-text-stroke:0.30px #d3d8e0">BTC Price</div>
<div class="t" style="left:2443.43px;top:666.44px;font-size:30.072px;font-weight:normal;color:#ffffff;transform:scaleX(0.9647);-webkit-text-stroke:0.50px #ffffff">$89481.00</div>
<div class="t" style="left:2244.90px;top:710.62px;font-size:30.333px;font-weight:normal;color:#d3d8e0;transform:scaleX(1.0100);-webkit-text-stroke:0.30px #d3d8e0">Open Interest</div>
<div class="t" style="left:2472.43px;top:710.84px;font-size:30.072px;font-weight:normal;color:#ffffff;transform:scaleX(0.9700);-webkit-text-stroke:0.50px #ffffff">$59.64B</div>
<div class="t" style="left:2555.07px;top:1009.48px;font-size:24.710px;font-weight:normal;color:#ffffff;transform:scaleX(0.9364);-webkit-text-stroke:0.50px #ffffff">23 Jan 2026, 03:00</div>
<div class="t" style="left:2511.24px;top:926.50px;font-size:35.205px;font-weight:bold;color:#a4a6a8;transform:scaleX(0.8935)">coinglass</div>
</body></html>
